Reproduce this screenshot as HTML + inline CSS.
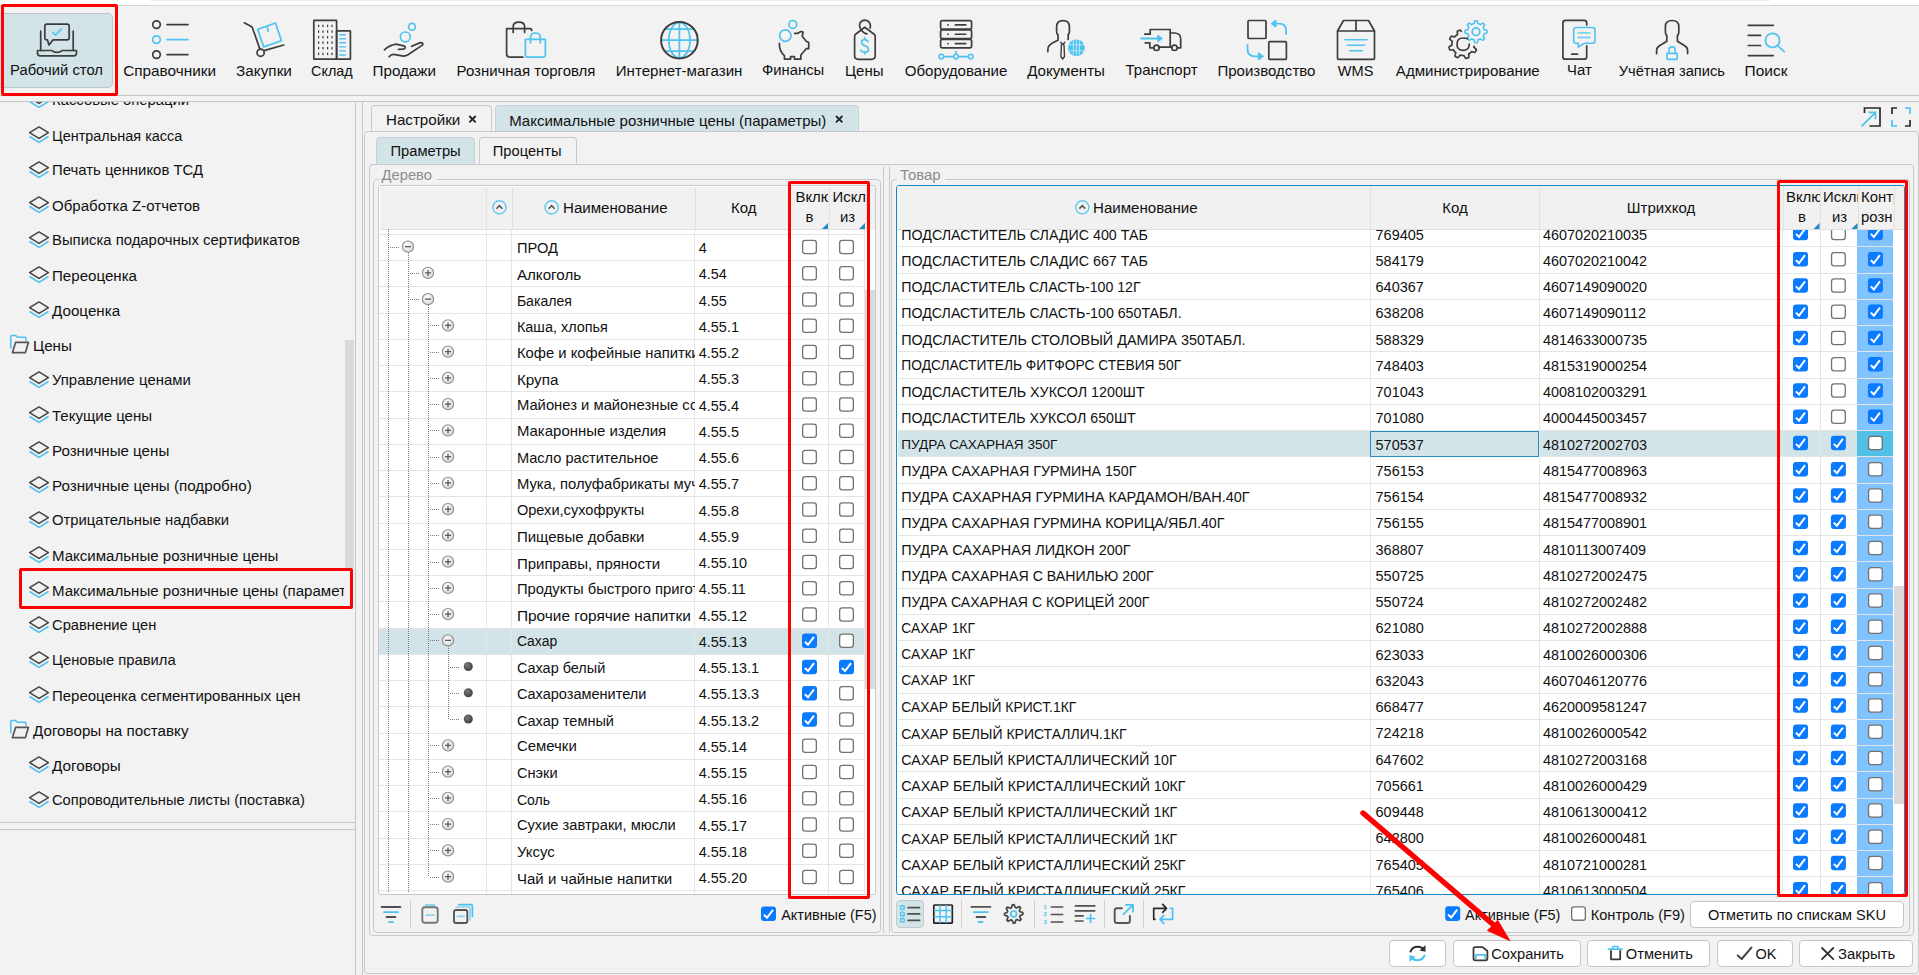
<!DOCTYPE html><html><head><meta charset="utf-8"><style>
html,body{margin:0;padding:0;}
body{width:1919px;height:975px;position:relative;overflow:hidden;background:#f2f2f2;font-family:"Liberation Sans", sans-serif;}
.t{position:absolute;white-space:nowrap;line-height:1;font-family:"Liberation Sans", sans-serif;}
div,svg{box-sizing:border-box;}
</style></head><body>
<div style="position:absolute;left:0px;top:0px;width:1919px;height:5px;background:#ffffff"></div>
<div style="position:absolute;left:150px;top:0px;width:1620px;height:1px;background:#eceeee"></div>
<div style="position:absolute;left:0px;top:5px;width:1919px;height:1px;background:#d6d6d6"></div>
<div style="position:absolute;left:0px;top:6px;width:1919px;height:89px;background:#f2f2f2"></div>
<div style="position:absolute;left:0px;top:95px;width:1919px;height:1px;background:#c6c6c6"></div>
<div style="position:absolute;left:0px;top:96px;width:1919px;height:5px;background:#f2f2f2"></div>
<div style="position:absolute;left:0px;top:101px;width:1919px;height:1px;background:#c6c6c6"></div>
<div style="position:absolute;left:-6px;top:13px;width:119px;height:75px;background:#d3e4e8;border:1px solid #bdc6c9;border-radius:5px"></div>
<div class="t" style="left:-243.5px;width:600px;text-align:center;top:63.45px;font-size:14.82px;color:#111111;">Рабочий стол</div>
<div class="t" style="left:-130.4px;width:600px;text-align:center;top:63.01px;font-size:15.35px;color:#111111;">Справочники</div>
<div class="t" style="left:-36px;width:600px;text-align:center;top:63.05px;font-size:15.3px;color:#111111;">Закупки</div>
<div class="t" style="left:31.899999999999977px;width:600px;text-align:center;top:63.81px;font-size:14.4px;color:#111111;">Склад</div>
<div class="t" style="left:104.25px;width:600px;text-align:center;top:63.13px;font-size:15.2px;color:#111111;">Продажи</div>
<div class="t" style="left:226px;width:600px;text-align:center;top:63.32px;font-size:14.98px;color:#111111;">Розничная торговля</div>
<div class="t" style="left:379.1px;width:600px;text-align:center;top:63.23px;font-size:15.09px;color:#111111;">Интернет-магазин</div>
<div class="t" style="left:493.1px;width:600px;text-align:center;top:63.45px;font-size:14.83px;color:#111111;">Финансы</div>
<div class="t" style="left:564.25px;width:600px;text-align:center;top:63.30px;font-size:15.0px;color:#111111;">Цены</div>
<div class="t" style="left:656px;width:600px;text-align:center;top:63.23px;font-size:15.09px;color:#111111;">Оборудование</div>
<div class="t" style="left:766.0999999999999px;width:600px;text-align:center;top:63.23px;font-size:15.09px;color:#111111;">Документы</div>
<div class="t" style="left:861.5px;width:600px;text-align:center;top:63.33px;font-size:14.97px;color:#111111;">Транспорт</div>
<div class="t" style="left:966.45px;width:600px;text-align:center;top:63.26px;font-size:15.05px;color:#111111;">Производство</div>
<div class="t" style="left:1055.7px;width:600px;text-align:center;top:63.64px;font-size:14.6px;color:#111111;">WMS</div>
<div class="t" style="left:1167.8px;width:600px;text-align:center;top:63.22px;font-size:15.1px;color:#111111;">Администрирование</div>
<div class="t" style="left:1279.4px;width:600px;text-align:center;top:63.39px;font-size:14.9px;color:#111111;">Чат</div>
<div class="t" style="left:1371.85px;width:600px;text-align:center;top:63.56px;font-size:14.7px;color:#111111;">Учётная запись</div>
<div class="t" style="left:1466px;width:600px;text-align:center;top:62.88px;font-size:15.5px;color:#111111;">Поиск</div>
<svg style="position:absolute;left:0;top:0" width="1919" height="100" viewBox="0 0 1919 100" fill="none"><path d="M47.5 39.9 L48.9 45 L53 39.9 L67 39.9 Q69.2 39.9 69.2 37.7 L69.2 26.4 Q69.2 24.2 67 24.2 L47 24.2 Q44.8 24.2 44.8 26.4 L44.8 37.7 Q44.8 39.9 47 39.9" stroke="#3d3d3d" stroke-width="1.7" fill="none" stroke-linecap="round" stroke-linejoin="round" /><path d="M40.7 31 V50.5 M73.2 31 V50.5" stroke="#3d3d3d" stroke-width="1.7" fill="none" stroke-linecap="round" stroke-linejoin="round" /><path d="M43.8 50.5 H37.5 V53 Q37.5 55.8 40.3 55.8 H73.7 Q76.5 55.8 76.5 53 V50.5 H70.6" stroke="#3d3d3d" stroke-width="1.7" fill="none" stroke-linecap="round" stroke-linejoin="round" /><path d="M44 50.5 H52 Q53.5 52.4 57 52.4 Q60.5 52.4 62 50.5 H70.5" stroke="#3d3d3d" stroke-width="1.7" fill="none" stroke-linecap="round" stroke-linejoin="round" /><path d="M52.8 32.3 L55.6 35 L61.3 29" stroke="#4fc3f0" stroke-width="1.7" fill="none" stroke-linecap="round" stroke-linejoin="round" /><circle cx="156.5" cy="24.6" r="3.8" stroke="#3d3d3d" stroke-width="1.7" fill="none"/><path d="M167 24.6 H188" stroke="#3d3d3d" stroke-width="1.7" fill="none" stroke-linecap="round" stroke-linejoin="round" /><circle cx="156.5" cy="39.6" r="3.8" stroke="#4fc3f0" stroke-width="1.7" fill="none"/><path d="M167 39.6 H188" stroke="#4fc3f0" stroke-width="1.7" fill="none" stroke-linecap="round" stroke-linejoin="round" /><circle cx="156.5" cy="54.6" r="3.8" stroke="#3d3d3d" stroke-width="1.7" fill="none"/><path d="M167 54.6 H188" stroke="#3d3d3d" stroke-width="1.7" fill="none" stroke-linecap="round" stroke-linejoin="round" /><path d="M244.3 22.8 L252.1 27 L260 49.4" stroke="#3d3d3d" stroke-width="1.7" fill="none" stroke-linecap="round" stroke-linejoin="round" /><circle cx="260.6" cy="52.7" r="3.6" stroke="#3d3d3d" stroke-width="1.7" fill="none"/><path d="M264 50.6 L283.8 45" stroke="#3d3d3d" stroke-width="1.7" fill="none" stroke-linecap="round" stroke-linejoin="round" /><path d="M257.7 29.4 L275.5 23 L281.4 40.7 L263.7 46.9 Z" stroke="#4fc3f0" stroke-width="1.7" fill="none" stroke-linecap="round" stroke-linejoin="round" /><path d="M267.3 27 L268.3 31.5" stroke="#4fc3f0" stroke-width="1.7" fill="none" stroke-linecap="round" stroke-linejoin="round" /><rect x="313.8" y="20.4" width="22.8" height="38.8" rx="0.5" stroke="#3d3d3d" stroke-width="1.7" fill="none"/><rect x="336.6" y="30.8" width="13.8" height="28.4" rx="0.5" stroke="#3d3d3d" stroke-width="1.7" fill="none"/><rect x="318.0" y="24.7" width="1.2" height="2.4" fill="#3d3d3d"/><rect x="318.0" y="30.400000000000002" width="1.2" height="2.4" fill="#3d3d3d"/><rect x="318.0" y="36.0" width="1.2" height="2.4" fill="#3d3d3d"/><rect x="318.0" y="41.4" width="1.2" height="2.4" fill="#3d3d3d"/><rect x="318.0" y="47.0" width="1.2" height="2.4" fill="#3d3d3d"/><rect x="318.0" y="52.699999999999996" width="1.2" height="2.4" fill="#3d3d3d"/><rect x="322.4" y="24.7" width="1.2" height="2.4" fill="#3d3d3d"/><rect x="322.4" y="30.400000000000002" width="1.2" height="2.4" fill="#3d3d3d"/><rect x="322.4" y="36.0" width="1.2" height="2.4" fill="#3d3d3d"/><rect x="322.4" y="41.4" width="1.2" height="2.4" fill="#3d3d3d"/><rect x="322.4" y="47.0" width="1.2" height="2.4" fill="#3d3d3d"/><rect x="322.4" y="52.699999999999996" width="1.2" height="2.4" fill="#3d3d3d"/><rect x="327.0" y="24.7" width="1.2" height="2.4" fill="#3d3d3d"/><rect x="327.0" y="30.400000000000002" width="1.2" height="2.4" fill="#3d3d3d"/><rect x="327.0" y="36.0" width="1.2" height="2.4" fill="#3d3d3d"/><rect x="327.0" y="41.4" width="1.2" height="2.4" fill="#3d3d3d"/><rect x="327.0" y="47.0" width="1.2" height="2.4" fill="#3d3d3d"/><rect x="327.0" y="52.699999999999996" width="1.2" height="2.4" fill="#3d3d3d"/><rect x="331.4" y="24.7" width="1.2" height="2.4" fill="#3d3d3d"/><rect x="331.4" y="30.400000000000002" width="1.2" height="2.4" fill="#3d3d3d"/><rect x="331.4" y="36.0" width="1.2" height="2.4" fill="#3d3d3d"/><rect x="331.4" y="41.4" width="1.2" height="2.4" fill="#3d3d3d"/><rect x="331.4" y="47.0" width="1.2" height="2.4" fill="#3d3d3d"/><rect x="331.4" y="52.699999999999996" width="1.2" height="2.4" fill="#3d3d3d"/><path d="M339.6 34.7 H345.4" stroke="#4fc3f0" stroke-width="1.4" fill="none" stroke-linecap="round" stroke-linejoin="round" /><path d="M339.6 38.8 H345.4" stroke="#4fc3f0" stroke-width="1.4" fill="none" stroke-linecap="round" stroke-linejoin="round" /><path d="M339.6 42.8 H345.4" stroke="#4fc3f0" stroke-width="1.4" fill="none" stroke-linecap="round" stroke-linejoin="round" /><path d="M339.6 46.9 H345.4" stroke="#4fc3f0" stroke-width="1.4" fill="none" stroke-linecap="round" stroke-linejoin="round" /><path d="M339.6 50.9 H345.4" stroke="#4fc3f0" stroke-width="1.4" fill="none" stroke-linecap="round" stroke-linejoin="round" /><path d="M339.6 55 H345.4" stroke="#4fc3f0" stroke-width="1.4" fill="none" stroke-linecap="round" stroke-linejoin="round" /><path d="M384.4 49.8 Q390 45 396.4 44.2 L404.5 46.2 Q406.5 48 403.5 49.2 L398.5 49.4" stroke="#3d3d3d" stroke-width="1.7" fill="none" stroke-linecap="round" stroke-linejoin="round" /><path d="M389.1 56.7 Q391 54.2 393.5 54.3 L403.7 56.1 Q406 56 408 54.8 L422.8 44.9 Q423.3 42.6 420.4 42.6 L411.6 46.3" stroke="#3d3d3d" stroke-width="1.7" fill="none" stroke-linecap="round" stroke-linejoin="round" /><circle cx="412" cy="26.7" r="3.4" stroke="#4fc3f0" stroke-width="1.7" fill="none"/><circle cx="405.3" cy="36.9" r="4.9" stroke="#4fc3f0" stroke-width="1.7" fill="none"/><path d="M523 57.1 H509.6 Q506.6 57.1 506.6 54.1 V28.7 H530.2 Q531.7 28.7 531.7 30.5" stroke="#3d3d3d" stroke-width="1.7" fill="none" stroke-linecap="round" stroke-linejoin="round" /><path d="M513.2 32.5 V26.5 Q513.2 22.1 518.9 22.1 Q524.6 22.1 524.6 26.5 V32.5" stroke="#3d3d3d" stroke-width="1.7" fill="none" stroke-linecap="round" stroke-linejoin="round" /><path d="M525.4 39.3 H545.4 V54.6 Q545.4 57.1 542.9 57.1 H527.9 Q525.4 57.1 525.4 54.6 Z" stroke="#4fc3f0" stroke-width="1.7" fill="none" stroke-linecap="round" stroke-linejoin="round" /><path d="M530.5 42.9 V37.3 Q530.5 33 535.4 33 Q540.3 33 540.3 37.3 V42.9" stroke="#4fc3f0" stroke-width="1.7" fill="none" stroke-linecap="round" stroke-linejoin="round" /><ellipse cx="679.4" cy="40.2" rx="10.6" ry="17.8" stroke="#4fc3f0" stroke-width="1.7" fill="none"/><path d="M679.4 22.5 V58 M661.5 40.2 H697.3 M665.6 29.2 H693.2 M665.6 51.2 H693.2" stroke="#4fc3f0" stroke-width="1.7" fill="none" stroke-linejoin="round" stroke-linecap="butt"/><circle cx="679.4" cy="40.2" r="18.3" stroke="#3d3d3d" stroke-width="2" fill="none"/><circle cx="792.8" cy="24.4" r="3.9" stroke="#4fc3f0" stroke-width="1.7" fill="none"/><circle cx="785.3" cy="35.6" r="5.7" stroke="#4fc3f0" stroke-width="1.7" fill="none"/><path d="M779.4 43.3 Q779 51 784.4 55.6 V59.1 H790.6 V56.6 H794.4 V59.1 H800.9 V55 L806.2 48.7 H808.7 V42.5 L806.2 41.2 L802.2 36.2 L803.1 32.2 Q802 31.3 800.9 31.6 L797.5 33.4 H794.7" stroke="#3d3d3d" stroke-width="1.7" fill="none" stroke-linecap="round" stroke-linejoin="round" /><path d="M867 33.8 Q864 33.5 862 31 Q859.5 28 859.5 25.5 Q860 20.5 864.7 20.2 Q869.5 20.2 870.4 25.5 Q870.6 27 870 28" stroke="#3d3d3d" stroke-width="1.7" fill="none" stroke-linecap="round"/><path d="M864.7 27.3 L874.2 34.2 Q875.2 35 875.2 36.5 V55.6 Q875.2 59.4 871.4 59.4 H858.4 Q854.6 59.4 854.6 55.6 V36.5 Q854.6 35 855.6 34.2 Z" stroke="#3d3d3d" stroke-width="1.7" fill="none" stroke-linecap="round" stroke-linejoin="round" /><path d="M868.2 41.5 Q866.8 39.6 864.4 39.6 Q861.5 39.6 861.5 42.3 Q861.5 44.6 864.7 45.6 Q868.4 46.5 868.4 49.4 Q868.4 52.2 864.8 52.2 Q862 52.2 860.8 50.2 M864.7 37.5 V39.6 M864.7 52.2 V54" stroke="#4fc3f0" stroke-width="1.7" fill="none" stroke-linecap="round" stroke-linejoin="round" /><rect x="940.6" y="20.6" width="31" height="8.6" rx="1.8" stroke="#3d3d3d" stroke-width="1.7" fill="none"/><circle cx="948" cy="24.900000000000002" r="0.9" fill="#3d3d3d"/><path d="M955.3 24.900000000000002 H965.8" stroke="#3d3d3d" stroke-width="1.6" fill="none" stroke-linecap="round" stroke-linejoin="round" /><rect x="940.6" y="29.950000000000003" width="31" height="8.6" rx="1.8" stroke="#3d3d3d" stroke-width="1.7" fill="none"/><circle cx="948" cy="34.25" r="0.9" fill="#3d3d3d"/><path d="M955.3 34.25 H965.8" stroke="#3d3d3d" stroke-width="1.6" fill="none" stroke-linecap="round" stroke-linejoin="round" /><rect x="940.6" y="39.3" width="31" height="8.6" rx="1.8" stroke="#3d3d3d" stroke-width="1.7" fill="none"/><circle cx="948" cy="43.599999999999994" r="0.9" fill="#3d3d3d"/><path d="M955.3 43.599999999999994 H965.8" stroke="#3d3d3d" stroke-width="1.6" fill="none" stroke-linecap="round" stroke-linejoin="round" /><path d="M941.5 56.6 H970.5" stroke="#4fc3f0" stroke-width="1.6" fill="none" stroke-linecap="round" stroke-linejoin="round" /><circle cx="941.3" cy="56.6" r="2.3" stroke="#4fc3f0" stroke-width="1.6" fill="#f2f2f2"/><circle cx="956" cy="56.6" r="2.3" stroke="#4fc3f0" stroke-width="1.6" fill="#f2f2f2"/><circle cx="970.8" cy="56.6" r="2.3" stroke="#4fc3f0" stroke-width="1.6" fill="#f2f2f2"/><path d="M956 51.5 V54" stroke="#4fc3f0" stroke-width="1.6" fill="none" stroke-linecap="round" stroke-linejoin="round" /><path d="M1057.6 34.5 Q1056.6 33.5 1056.6 31.5 V26.8 Q1056.6 20.6 1063 20.6 Q1069.4 20.6 1069.4 26.8 V31.5 Q1069.4 33.5 1068.2 34.5 V39.5" stroke="#3d3d3d" stroke-width="1.7" fill="none" stroke-linecap="round" stroke-linejoin="round" /><path d="M1058 34.8 V40.2 Q1051 43 1048.5 46.5 Q1047.8 48 1047.8 51.6" stroke="#3d3d3d" stroke-width="1.7" fill="none" stroke-linecap="round" stroke-linejoin="round" /><path d="M1060.6 42.3 L1062.7 44.6 L1064.8 42.3 M1061.4 44.8 L1060.9 56.5 L1062.7 59 L1064.5 56.5 L1064 44.8" stroke="#3d3d3d" stroke-width="1.4" fill="none" stroke-linecap="round" stroke-linejoin="round" /><circle cx="1076.4" cy="47.8" r="8.4" fill="#4fc3f0"/><path d="M1073.3 40.5 V55 M1076.4 39.5 V56 M1079.5 40.5 V55 M1068.5 44.8 H1084.3 M1068.5 50.8 H1084.3" stroke="#bfe6f8" stroke-width="0.9" fill="none"/><path d="M1144.8 34.2 H1150.2 V29.5 H1170.2 V47.1 M1170.2 33 H1175 Q1180.7 33.5 1180.7 39 V47.8 H1177.6 M1158.8 47.1 H1171.6 M1145.2 42.8 H1149.9 V47.8 H1153" stroke="#3d3d3d" stroke-width="1.7" fill="none" stroke-linecap="round" stroke-linejoin="round" /><circle cx="1156.5" cy="47.8" r="2.7" stroke="#3d3d3d" stroke-width="1.7" fill="none"/><circle cx="1174.5" cy="47.8" r="2.7" stroke="#3d3d3d" stroke-width="1.7" fill="none"/><path d="M1141.2 38.5 H1158.5" stroke="#4fc3f0" stroke-width="2.1" fill="none" stroke-linecap="round" stroke-linejoin="round" /><path d="M1162.6 38.5 L1157.8 35 V42 Z" fill="#4fc3f0" stroke="#4fc3f0" stroke-width="0.8" stroke-linejoin="round"/><rect x="1248" y="20.5" width="18" height="18" rx="1" stroke="#3d3d3d" stroke-width="1.7" fill="none"/><rect x="1268.8" y="41.7" width="17.6" height="17.6" rx="1" stroke="#3d3d3d" stroke-width="1.7" fill="none"/><path d="M1273 23.6 H1279.5 Q1286.1 23.6 1286.1 30.5 V34" stroke="#4fc3f0" stroke-width="1.8" fill="none" stroke-linecap="round" stroke-linejoin="round" /><path d="M1271 23.6 L1276 20 V27.2 Z" fill="#4fc3f0" stroke="#4fc3f0" stroke-width="1" stroke-linejoin="round"/><path d="M1247.5 45 V49 Q1247.5 56.3 1255 56.3 H1260.5" stroke="#4fc3f0" stroke-width="1.8" fill="none" stroke-linecap="round" stroke-linejoin="round" /><path d="M1263.5 56.3 L1258.3 52.6 V60 Z" fill="#4fc3f0" stroke="#4fc3f0" stroke-width="1" stroke-linejoin="round"/><path d="M1337.5 31 L1343.5 20.5 H1368.5 L1374.5 31 V58.3 Q1374.5 59.4 1373.4 59.4 H1338.6 Q1337.5 59.4 1337.5 58.3 Z M1337.5 31 H1374.5 M1356 20.5 V31" stroke="#3d3d3d" stroke-width="1.7" fill="none" stroke-linecap="round" stroke-linejoin="round" /><path d="M1345 39.8 H1367 M1347.5 45.3 H1364.5 M1349.5 50.8 H1362.5" stroke="#4fc3f0" stroke-width="1.6" fill="none" stroke-linecap="round" stroke-linejoin="round" /><path d="M1487.00 31.70 L1487.00 31.80 L1487.00 31.89 L1487.00 31.99 L1486.99 32.08 L1486.99 32.18 L1486.98 32.28 L1486.98 32.37 L1486.97 32.47 L1486.97 32.56 L1486.96 32.66 L1486.95 32.75 L1486.94 32.85 L1486.85 32.94 L1486.63 33.01 L1486.41 33.07 L1486.20 33.13 L1485.98 33.19 L1485.76 33.25 L1485.55 33.30 L1485.33 33.34 L1485.11 33.39 L1484.89 33.43 L1484.68 33.47 L1484.46 33.50 L1484.24 33.53 L1484.18 33.59 L1484.17 33.66 L1484.15 33.73 L1484.13 33.80 L1484.11 33.87 L1484.09 33.94 L1484.07 34.02 L1484.05 34.09 L1484.03 34.16 L1484.01 34.23 L1483.99 34.30 L1483.97 34.37 L1483.94 34.43 L1483.92 34.50 L1483.89 34.57 L1483.87 34.64 L1483.84 34.71 L1483.82 34.78 L1483.79 34.85 L1483.76 34.91 L1483.73 34.98 L1483.70 35.05 L1483.67 35.12 L1483.64 35.18 L1483.61 35.25 L1483.58 35.32 L1483.55 35.38 L1483.52 35.45 L1483.48 35.51 L1483.45 35.58 L1483.42 35.64 L1483.38 35.71 L1483.35 35.77 L1483.31 35.84 L1483.27 35.90 L1483.24 35.96 L1483.20 36.03 L1483.16 36.09 L1483.12 36.15 L1483.12 36.24 L1483.25 36.41 L1483.38 36.59 L1483.51 36.77 L1483.64 36.95 L1483.76 37.13 L1483.88 37.32 L1484.00 37.51 L1484.11 37.70 L1484.22 37.90 L1484.33 38.09 L1484.44 38.29 L1484.54 38.50 L1484.55 38.62 L1484.49 38.70 L1484.43 38.77 L1484.36 38.84 L1484.30 38.92 L1484.24 38.99 L1484.17 39.06 L1484.11 39.13 L1484.04 39.20 L1483.98 39.27 L1483.91 39.34 L1483.85 39.41 L1483.78 39.48 L1483.71 39.55 L1483.64 39.61 L1483.57 39.68 L1483.50 39.74 L1483.43 39.81 L1483.36 39.87 L1483.29 39.94 L1483.22 40.00 L1483.14 40.06 L1483.07 40.13 L1483.00 40.19 L1482.92 40.25 L1482.80 40.24 L1482.59 40.14 L1482.39 40.03 L1482.20 39.92 L1482.00 39.81 L1481.81 39.70 L1481.62 39.58 L1481.43 39.46 L1481.25 39.34 L1481.07 39.21 L1480.89 39.08 L1480.71 38.95 L1480.54 38.82 L1480.45 38.82 L1480.39 38.86 L1480.33 38.90 L1480.26 38.94 L1480.20 38.97 L1480.14 39.01 L1480.07 39.05 L1480.01 39.08 L1479.94 39.12 L1479.88 39.15 L1479.81 39.18 L1479.75 39.22 L1479.68 39.25 L1479.62 39.28 L1479.55 39.31 L1479.48 39.34 L1479.42 39.37 L1479.35 39.40 L1479.28 39.43 L1479.21 39.46 L1479.15 39.49 L1479.08 39.52 L1479.01 39.54 L1478.94 39.57 L1478.87 39.59 L1478.80 39.62 L1478.73 39.64 L1478.67 39.67 L1478.60 39.69 L1478.53 39.71 L1478.46 39.73 L1478.39 39.75 L1478.32 39.77 L1478.24 39.79 L1478.17 39.81 L1478.10 39.83 L1478.03 39.85 L1477.96 39.87 L1477.89 39.88 L1477.83 39.94 L1477.80 40.16 L1477.77 40.38 L1477.73 40.59 L1477.69 40.81 L1477.64 41.03 L1477.60 41.25 L1477.55 41.46 L1477.49 41.68 L1477.43 41.90 L1477.37 42.11 L1477.31 42.33 L1477.24 42.55 L1477.15 42.64 L1477.05 42.65 L1476.96 42.66 L1476.86 42.67 L1476.77 42.67 L1476.67 42.68 L1476.58 42.68 L1476.48 42.69 L1476.38 42.69 L1476.29 42.70 L1476.19 42.70 L1476.10 42.70 L1476.00 42.70 L1475.90 42.70 L1475.81 42.70 L1475.71 42.70 L1475.62 42.69 L1475.52 42.69 L1475.42 42.68 L1475.33 42.68 L1475.23 42.67 L1475.14 42.67 L1475.04 42.66 L1474.95 42.65 L1474.85 42.64 L1474.76 42.55 L1474.69 42.33 L1474.63 42.11 L1474.57 41.90 L1474.51 41.68 L1474.45 41.46 L1474.40 41.25 L1474.36 41.03 L1474.31 40.81 L1474.27 40.59 L1474.23 40.38 L1474.20 40.16 L1474.17 39.94 L1474.11 39.88 L1474.04 39.87 L1473.97 39.85 L1473.90 39.83 L1473.83 39.81 L1473.76 39.79 L1473.68 39.77 L1473.61 39.75 L1473.54 39.73 L1473.47 39.71 L1473.40 39.69 L1473.33 39.67 L1473.27 39.64 L1473.20 39.62 L1473.13 39.59 L1473.06 39.57 L1472.99 39.54 L1472.92 39.52 L1472.85 39.49 L1472.79 39.46 L1472.72 39.43 L1472.65 39.40 L1472.58 39.37 L1472.52 39.34 L1472.45 39.31 L1472.38 39.28 L1472.32 39.25 L1472.25 39.22 L1472.19 39.18 L1472.12 39.15 L1472.06 39.12 L1471.99 39.08 L1471.93 39.05 L1471.86 39.01 L1471.80 38.97 L1471.74 38.94 L1471.67 38.90 L1471.61 38.86 L1471.55 38.82 L1471.46 38.82 L1471.29 38.95 L1471.11 39.08 L1470.93 39.21 L1470.75 39.34 L1470.57 39.46 L1470.38 39.58 L1470.19 39.70 L1470.00 39.81 L1469.80 39.92 L1469.61 40.03 L1469.41 40.14 L1469.20 40.24 L1469.08 40.25 L1469.00 40.19 L1468.93 40.13 L1468.86 40.06 L1468.78 40.00 L1468.71 39.94 L1468.64 39.87 L1468.57 39.81 L1468.50 39.74 L1468.43 39.68 L1468.36 39.61 L1468.29 39.55 L1468.22 39.48 L1468.15 39.41 L1468.09 39.34 L1468.02 39.27 L1467.96 39.20 L1467.89 39.13 L1467.83 39.06 L1467.76 38.99 L1467.70 38.92 L1467.64 38.84 L1467.57 38.77 L1467.51 38.70 L1467.45 38.62 L1467.46 38.50 L1467.56 38.29 L1467.67 38.09 L1467.78 37.90 L1467.89 37.70 L1468.00 37.51 L1468.12 37.32 L1468.24 37.13 L1468.36 36.95 L1468.49 36.77 L1468.62 36.59 L1468.75 36.41 L1468.88 36.24 L1468.88 36.15 L1468.84 36.09 L1468.80 36.03 L1468.76 35.96 L1468.73 35.90 L1468.69 35.84 L1468.65 35.77 L1468.62 35.71 L1468.58 35.64 L1468.55 35.58 L1468.52 35.51 L1468.48 35.45 L1468.45 35.38 L1468.42 35.32 L1468.39 35.25 L1468.36 35.18 L1468.33 35.12 L1468.30 35.05 L1468.27 34.98 L1468.24 34.91 L1468.21 34.85 L1468.18 34.78 L1468.16 34.71 L1468.13 34.64 L1468.11 34.57 L1468.08 34.50 L1468.06 34.43 L1468.03 34.37 L1468.01 34.30 L1467.99 34.23 L1467.97 34.16 L1467.95 34.09 L1467.93 34.02 L1467.91 33.94 L1467.89 33.87 L1467.87 33.80 L1467.85 33.73 L1467.83 33.66 L1467.82 33.59 L1467.76 33.53 L1467.54 33.50 L1467.32 33.47 L1467.11 33.43 L1466.89 33.39 L1466.67 33.34 L1466.45 33.30 L1466.24 33.25 L1466.02 33.19 L1465.80 33.13 L1465.59 33.07 L1465.37 33.01 L1465.15 32.94 L1465.06 32.85 L1465.05 32.75 L1465.04 32.66 L1465.03 32.56 L1465.03 32.47 L1465.02 32.37 L1465.02 32.28 L1465.01 32.18 L1465.01 32.08 L1465.00 31.99 L1465.00 31.89 L1465.00 31.80 L1465.00 31.70 L1465.00 31.60 L1465.00 31.51 L1465.00 31.41 L1465.01 31.32 L1465.01 31.22 L1465.02 31.12 L1465.02 31.03 L1465.03 30.93 L1465.03 30.84 L1465.04 30.74 L1465.05 30.65 L1465.06 30.55 L1465.15 30.46 L1465.37 30.39 L1465.59 30.33 L1465.80 30.27 L1466.02 30.21 L1466.24 30.15 L1466.45 30.10 L1466.67 30.06 L1466.89 30.01 L1467.11 29.97 L1467.32 29.93 L1467.54 29.90 L1467.76 29.87 L1467.82 29.81 L1467.83 29.74 L1467.85 29.67 L1467.87 29.60 L1467.89 29.53 L1467.91 29.46 L1467.93 29.38 L1467.95 29.31 L1467.97 29.24 L1467.99 29.17 L1468.01 29.10 L1468.03 29.03 L1468.06 28.97 L1468.08 28.90 L1468.11 28.83 L1468.13 28.76 L1468.16 28.69 L1468.18 28.62 L1468.21 28.55 L1468.24 28.49 L1468.27 28.42 L1468.30 28.35 L1468.33 28.28 L1468.36 28.22 L1468.39 28.15 L1468.42 28.08 L1468.45 28.02 L1468.48 27.95 L1468.52 27.89 L1468.55 27.82 L1468.58 27.76 L1468.62 27.69 L1468.65 27.63 L1468.69 27.56 L1468.73 27.50 L1468.76 27.44 L1468.80 27.37 L1468.84 27.31 L1468.88 27.25 L1468.88 27.16 L1468.75 26.99 L1468.62 26.81 L1468.49 26.63 L1468.36 26.45 L1468.24 26.27 L1468.12 26.08 L1468.00 25.89 L1467.89 25.70 L1467.78 25.50 L1467.67 25.31 L1467.56 25.11 L1467.46 24.90 L1467.45 24.78 L1467.51 24.70 L1467.57 24.63 L1467.64 24.56 L1467.70 24.48 L1467.76 24.41 L1467.83 24.34 L1467.89 24.27 L1467.96 24.20 L1468.02 24.13 L1468.09 24.06 L1468.15 23.99 L1468.22 23.92 L1468.29 23.85 L1468.36 23.79 L1468.43 23.72 L1468.50 23.66 L1468.57 23.59 L1468.64 23.53 L1468.71 23.46 L1468.78 23.40 L1468.86 23.34 L1468.93 23.27 L1469.00 23.21 L1469.08 23.15 L1469.20 23.16 L1469.41 23.26 L1469.61 23.37 L1469.80 23.48 L1470.00 23.59 L1470.19 23.70 L1470.38 23.82 L1470.57 23.94 L1470.75 24.06 L1470.93 24.19 L1471.11 24.32 L1471.29 24.45 L1471.46 24.58 L1471.55 24.58 L1471.61 24.54 L1471.67 24.50 L1471.74 24.46 L1471.80 24.43 L1471.86 24.39 L1471.93 24.35 L1471.99 24.32 L1472.06 24.28 L1472.12 24.25 L1472.19 24.22 L1472.25 24.18 L1472.32 24.15 L1472.38 24.12 L1472.45 24.09 L1472.52 24.06 L1472.58 24.03 L1472.65 24.00 L1472.72 23.97 L1472.79 23.94 L1472.85 23.91 L1472.92 23.88 L1472.99 23.86 L1473.06 23.83 L1473.13 23.81 L1473.20 23.78 L1473.27 23.76 L1473.33 23.73 L1473.40 23.71 L1473.47 23.69 L1473.54 23.67 L1473.61 23.65 L1473.68 23.63 L1473.76 23.61 L1473.83 23.59 L1473.90 23.57 L1473.97 23.55 L1474.04 23.53 L1474.11 23.52 L1474.17 23.46 L1474.20 23.24 L1474.23 23.02 L1474.27 22.81 L1474.31 22.59 L1474.36 22.37 L1474.40 22.15 L1474.45 21.94 L1474.51 21.72 L1474.57 21.50 L1474.63 21.29 L1474.69 21.07 L1474.76 20.85 L1474.85 20.76 L1474.95 20.75 L1475.04 20.74 L1475.14 20.73 L1475.23 20.73 L1475.33 20.72 L1475.42 20.72 L1475.52 20.71 L1475.62 20.71 L1475.71 20.70 L1475.81 20.70 L1475.90 20.70 L1476.00 20.70 L1476.10 20.70 L1476.19 20.70 L1476.29 20.70 L1476.38 20.71 L1476.48 20.71 L1476.58 20.72 L1476.67 20.72 L1476.77 20.73 L1476.86 20.73 L1476.96 20.74 L1477.05 20.75 L1477.15 20.76 L1477.24 20.85 L1477.31 21.07 L1477.37 21.29 L1477.43 21.50 L1477.49 21.72 L1477.55 21.94 L1477.60 22.15 L1477.64 22.37 L1477.69 22.59 L1477.73 22.81 L1477.77 23.02 L1477.80 23.24 L1477.83 23.46 L1477.89 23.52 L1477.96 23.53 L1478.03 23.55 L1478.10 23.57 L1478.17 23.59 L1478.24 23.61 L1478.32 23.63 L1478.39 23.65 L1478.46 23.67 L1478.53 23.69 L1478.60 23.71 L1478.67 23.73 L1478.73 23.76 L1478.80 23.78 L1478.87 23.81 L1478.94 23.83 L1479.01 23.86 L1479.08 23.88 L1479.15 23.91 L1479.21 23.94 L1479.28 23.97 L1479.35 24.00 L1479.42 24.03 L1479.48 24.06 L1479.55 24.09 L1479.62 24.12 L1479.68 24.15 L1479.75 24.18 L1479.81 24.22 L1479.88 24.25 L1479.94 24.28 L1480.01 24.32 L1480.07 24.35 L1480.14 24.39 L1480.20 24.43 L1480.26 24.46 L1480.33 24.50 L1480.39 24.54 L1480.45 24.58 L1480.54 24.58 L1480.71 24.45 L1480.89 24.32 L1481.07 24.19 L1481.25 24.06 L1481.43 23.94 L1481.62 23.82 L1481.81 23.70 L1482.00 23.59 L1482.20 23.48 L1482.39 23.37 L1482.59 23.26 L1482.80 23.16 L1482.92 23.15 L1483.00 23.21 L1483.07 23.27 L1483.14 23.34 L1483.22 23.40 L1483.29 23.46 L1483.36 23.53 L1483.43 23.59 L1483.50 23.66 L1483.57 23.72 L1483.64 23.79 L1483.71 23.85 L1483.78 23.92 L1483.85 23.99 L1483.91 24.06 L1483.98 24.13 L1484.04 24.20 L1484.11 24.27 L1484.17 24.34 L1484.24 24.41 L1484.30 24.48 L1484.36 24.56 L1484.43 24.63 L1484.49 24.70 L1484.55 24.78 L1484.54 24.90 L1484.44 25.11 L1484.33 25.31 L1484.22 25.50 L1484.11 25.70 L1484.00 25.89 L1483.88 26.08 L1483.76 26.27 L1483.64 26.45 L1483.51 26.63 L1483.38 26.81 L1483.25 26.99 L1483.12 27.16 L1483.12 27.25 L1483.16 27.31 L1483.20 27.37 L1483.24 27.44 L1483.27 27.50 L1483.31 27.56 L1483.35 27.63 L1483.38 27.69 L1483.42 27.76 L1483.45 27.82 L1483.48 27.89 L1483.52 27.95 L1483.55 28.02 L1483.58 28.08 L1483.61 28.15 L1483.64 28.22 L1483.67 28.28 L1483.70 28.35 L1483.73 28.42 L1483.76 28.49 L1483.79 28.55 L1483.82 28.62 L1483.84 28.69 L1483.87 28.76 L1483.89 28.83 L1483.92 28.90 L1483.94 28.97 L1483.97 29.03 L1483.99 29.10 L1484.01 29.17 L1484.03 29.24 L1484.05 29.31 L1484.07 29.38 L1484.09 29.46 L1484.11 29.53 L1484.13 29.60 L1484.15 29.67 L1484.17 29.74 L1484.18 29.81 L1484.24 29.87 L1484.46 29.90 L1484.68 29.93 L1484.89 29.97 L1485.11 30.01 L1485.33 30.06 L1485.55 30.10 L1485.76 30.15 L1485.98 30.21 L1486.20 30.27 L1486.41 30.33 L1486.63 30.39 L1486.85 30.46 L1486.94 30.55 L1486.95 30.65 L1486.96 30.74 L1486.97 30.84 L1486.97 30.93 L1486.98 31.03 L1486.98 31.12 L1486.99 31.22 L1486.99 31.32 L1487.00 31.41 L1487.00 31.51 L1487.00 31.60 L1487.00 31.70 Z" stroke="#4fc3f0" stroke-width="1.6" fill="none" stroke-linecap="round" stroke-linejoin="round" /><circle cx="1476" cy="31.7" r="3.8" stroke="#4fc3f0" stroke-width="1.7" fill="none"/><path d="M1474.13 46.24 L1474.12 46.31 L1474.11 46.38 L1474.09 46.45 L1474.08 46.51 L1474.07 46.58 L1474.05 46.65 L1474.04 46.71 L1474.02 46.78 L1474.01 46.85 L1473.99 46.91 L1473.97 46.98 L1473.96 47.05 L1473.94 47.11 L1473.92 47.18 L1473.91 47.25 L1473.99 47.34 L1474.14 47.45 L1474.29 47.57 L1474.44 47.69 L1474.59 47.81 L1474.74 47.94 L1474.88 48.06 L1475.03 48.19 L1475.17 48.32 L1475.32 48.45 L1475.46 48.58 L1475.60 48.71 L1475.74 48.85 L1475.88 48.99 L1476.02 49.13 L1476.15 49.27 L1476.29 49.42 L1476.42 49.56 L1476.46 49.67 L1476.43 49.75 L1476.39 49.83 L1476.36 49.91 L1476.33 50.00 L1476.29 50.08 L1476.26 50.16 L1476.22 50.24 L1476.18 50.32 L1476.15 50.40 L1476.11 50.48 L1476.07 50.56 L1476.03 50.64 L1475.99 50.71 L1475.95 50.79 L1475.91 50.87 L1475.87 50.95 L1475.83 51.03 L1475.79 51.10 L1475.75 51.18 L1475.71 51.26 L1475.66 51.34 L1475.62 51.41 L1475.58 51.49 L1475.53 51.57 L1475.49 51.64 L1475.44 51.72 L1475.40 51.79 L1475.35 51.87 L1475.31 51.94 L1475.26 52.02 L1475.21 52.09 L1475.16 52.16 L1475.11 52.24 L1475.07 52.31 L1475.02 52.38 L1474.88 52.40 L1474.69 52.37 L1474.49 52.34 L1474.30 52.30 L1474.11 52.27 L1473.91 52.23 L1473.72 52.19 L1473.53 52.15 L1473.34 52.10 L1473.15 52.06 L1472.97 52.01 L1472.78 51.96 L1472.59 51.91 L1472.41 51.85 L1472.23 51.80 L1472.04 51.74 L1471.86 51.68 L1471.68 51.62 L1471.58 51.62 L1471.53 51.67 L1471.49 51.72 L1471.44 51.77 L1471.40 51.82 L1471.35 51.87 L1471.30 51.92 L1471.26 51.97 L1471.21 52.02 L1471.16 52.07 L1471.12 52.12 L1471.07 52.17 L1471.02 52.22 L1470.97 52.27 L1470.92 52.32 L1470.87 52.36 L1470.82 52.41 L1470.77 52.46 L1470.72 52.50 L1470.67 52.55 L1470.62 52.60 L1470.57 52.64 L1470.52 52.69 L1470.47 52.73 L1470.42 52.78 L1470.37 52.82 L1470.31 52.87 L1470.26 52.91 L1470.21 52.95 L1470.16 53.00 L1470.10 53.04 L1470.05 53.08 L1470.00 53.13 L1469.94 53.17 L1469.89 53.21 L1469.83 53.25 L1469.78 53.29 L1469.72 53.33 L1469.67 53.37 L1469.61 53.41 L1469.56 53.45 L1469.50 53.49 L1469.44 53.53 L1469.39 53.57 L1469.33 53.61 L1469.27 53.64 L1469.22 53.68 L1469.16 53.72 L1469.10 53.76 L1469.04 53.79 L1468.99 53.83 L1468.93 53.86 L1468.87 53.90 L1468.81 53.94 L1468.75 53.97 L1468.69 54.00 L1468.63 54.04 L1468.66 54.23 L1468.68 54.42 L1468.71 54.61 L1468.73 54.80 L1468.75 54.99 L1468.76 55.18 L1468.78 55.37 L1468.79 55.57 L1468.80 55.76 L1468.81 55.95 L1468.82 56.15 L1468.82 56.34 L1468.82 56.54 L1468.82 56.74 L1468.82 56.93 L1468.81 57.13 L1468.81 57.33 L1468.80 57.53 L1468.71 57.56 L1468.63 57.59 L1468.55 57.63 L1468.47 57.66 L1468.39 57.69 L1468.31 57.73 L1468.23 57.76 L1468.14 57.79 L1468.06 57.82 L1467.98 57.85 L1467.89 57.88 L1467.81 57.91 L1467.73 57.94 L1467.65 57.96 L1467.56 57.99 L1467.48 58.02 L1467.39 58.04 L1467.31 58.07 L1467.23 58.10 L1467.14 58.12 L1467.06 58.15 L1466.97 58.17 L1466.89 58.19 L1466.80 58.22 L1466.72 58.24 L1466.63 58.26 L1466.55 58.28 L1466.46 58.30 L1466.38 58.32 L1466.29 58.34 L1466.20 58.36 L1466.12 58.38 L1466.03 58.40 L1465.95 58.42 L1465.86 58.43 L1465.77 58.45 L1465.66 58.29 L1465.54 58.13 L1465.42 57.97 L1465.31 57.81 L1465.20 57.65 L1465.09 57.48 L1464.99 57.32 L1464.88 57.15 L1464.78 56.99 L1464.68 56.82 L1464.58 56.66 L1464.49 56.49 L1464.40 56.32 L1464.30 56.15 L1464.21 55.98 L1464.13 55.81 L1464.04 55.64 L1463.96 55.47 L1463.89 55.47 L1463.82 55.48 L1463.75 55.48 L1463.69 55.48 L1463.62 55.49 L1463.55 55.49 L1463.48 55.49 L1463.41 55.50 L1463.34 55.50 L1463.28 55.50 L1463.21 55.50 L1463.14 55.50 L1463.07 55.50 L1463.00 55.50 L1462.93 55.50 L1462.87 55.50 L1462.80 55.50 L1462.73 55.49 L1462.66 55.49 L1462.59 55.49 L1462.52 55.49 L1462.46 55.48 L1462.39 55.48 L1462.32 55.47 L1462.25 55.47 L1462.18 55.46 L1462.11 55.46 L1462.05 55.45 L1461.98 55.44 L1461.91 55.44 L1461.84 55.43 L1461.77 55.42 L1461.71 55.41 L1461.64 55.40 L1461.57 55.40 L1461.50 55.39 L1461.43 55.38 L1461.37 55.37 L1461.30 55.35 L1461.23 55.34 L1461.16 55.33 L1461.10 55.32 L1461.03 55.31 L1460.96 55.29 L1460.90 55.28 L1460.83 55.27 L1460.76 55.25 L1460.69 55.24 L1460.63 55.22 L1460.56 55.21 L1460.49 55.19 L1460.43 55.18 L1460.36 55.16 L1460.30 55.14 L1460.23 55.13 L1460.16 55.11 L1460.08 55.16 L1459.96 55.32 L1459.85 55.47 L1459.73 55.62 L1459.61 55.77 L1459.48 55.91 L1459.36 56.06 L1459.23 56.21 L1459.10 56.35 L1458.97 56.50 L1458.84 56.64 L1458.70 56.78 L1458.57 56.92 L1458.43 57.06 L1458.29 57.20 L1458.15 57.33 L1458.01 57.47 L1457.86 57.60 L1457.74 57.67 L1457.66 57.63 L1457.58 57.60 L1457.50 57.57 L1457.42 57.53 L1457.33 57.50 L1457.25 57.46 L1457.17 57.42 L1457.09 57.39 L1457.01 57.35 L1456.93 57.31 L1456.86 57.28 L1456.78 57.24 L1456.70 57.20 L1456.62 57.16 L1456.54 57.12 L1456.46 57.08 L1456.38 57.04 L1456.31 57.00 L1456.23 56.95 L1456.15 56.91 L1456.07 56.87 L1456.00 56.83 L1455.92 56.78 L1455.85 56.74 L1455.77 56.69 L1455.69 56.65 L1455.62 56.60 L1455.54 56.56 L1455.47 56.51 L1455.39 56.47 L1455.32 56.42 L1455.25 56.37 L1455.17 56.32 L1455.10 56.27 L1455.03 56.22 L1455.00 56.11 L1455.03 55.92 L1455.06 55.72 L1455.09 55.53 L1455.13 55.33 L1455.17 55.14 L1455.21 54.95 L1455.25 54.76 L1455.29 54.57 L1455.34 54.38 L1455.38 54.19 L1455.43 54.01 L1455.49 53.82 L1455.54 53.64 L1455.60 53.45 L1455.65 53.27 L1455.71 53.09 L1455.78 52.91 L1455.79 52.78 L1455.74 52.74 L1455.69 52.69 L1455.63 52.65 L1455.58 52.60 L1455.53 52.56 L1455.48 52.51 L1455.43 52.46 L1455.38 52.42 L1455.33 52.37 L1455.28 52.32 L1455.24 52.27 L1455.19 52.23 L1455.14 52.18 L1455.09 52.13 L1455.04 52.08 L1455.00 52.03 L1454.95 51.98 L1454.90 51.93 L1454.86 51.88 L1454.81 51.83 L1454.76 51.78 L1454.72 51.73 L1454.67 51.68 L1454.63 51.63 L1454.58 51.57 L1454.54 51.52 L1454.50 51.47 L1454.45 51.42 L1454.41 51.36 L1454.37 51.31 L1454.32 51.26 L1454.28 51.20 L1454.24 51.15 L1454.20 51.09 L1454.16 51.04 L1454.11 50.99 L1454.07 50.93 L1454.03 50.88 L1453.99 50.82 L1453.95 50.76 L1453.91 50.71 L1453.88 50.65 L1453.84 50.60 L1453.80 50.54 L1453.76 50.48 L1453.72 50.42 L1453.69 50.37 L1453.65 50.31 L1453.61 50.25 L1453.58 50.19 L1453.54 50.14 L1453.50 50.08 L1453.47 50.02 L1453.43 49.96 L1453.40 49.90 L1453.37 49.84 L1453.20 49.86 L1453.01 49.88 L1452.82 49.90 L1452.63 49.93 L1452.44 49.94 L1452.25 49.96 L1452.05 49.98 L1451.86 49.99 L1451.67 50.00 L1451.47 50.01 L1451.28 50.01 L1451.08 50.02 L1450.89 50.02 L1450.69 50.02 L1450.49 50.02 L1450.30 50.01 L1450.10 50.01 L1449.90 50.00 L1449.84 49.93 L1449.81 49.85 L1449.78 49.76 L1449.74 49.68 L1449.71 49.60 L1449.68 49.52 L1449.65 49.44 L1449.62 49.35 L1449.59 49.27 L1449.56 49.19 L1449.53 49.11 L1449.50 49.02 L1449.47 48.94 L1449.44 48.86 L1449.41 48.77 L1449.39 48.69 L1449.36 48.61 L1449.33 48.52 L1449.31 48.44 L1449.28 48.35 L1449.26 48.27 L1449.23 48.18 L1449.21 48.10 L1449.19 48.01 L1449.16 47.93 L1449.14 47.84 L1449.12 47.76 L1449.10 47.67 L1449.08 47.59 L1449.06 47.50 L1449.04 47.42 L1449.02 47.33 L1449.00 47.24 L1448.99 47.16 L1448.97 47.07 L1448.95 46.99 L1449.09 46.87 L1449.25 46.76 L1449.41 46.64 L1449.57 46.53 L1449.73 46.42 L1449.89 46.31 L1450.06 46.20 L1450.22 46.10 L1450.39 46.00 L1450.55 45.90 L1450.72 45.80 L1450.89 45.70 L1451.06 45.61 L1451.23 45.52 L1451.40 45.43 L1451.57 45.34 L1451.74 45.25 L1451.91 45.17 L1451.93 45.10 L1451.92 45.03 L1451.92 44.96 L1451.92 44.90 L1451.91 44.83 L1451.91 44.76 L1451.91 44.69 L1451.90 44.62 L1451.90 44.55 L1451.90 44.49 L1451.90 44.42 L1451.90 44.35 L1451.90 44.28 L1451.90 44.21 L1451.90 44.14 L1451.90 44.08 L1451.90 44.01 L1451.91 43.94 L1451.91 43.87 L1451.91 43.80 L1451.91 43.73 L1451.92 43.67 L1451.92 43.60 L1451.93 43.53 L1451.93 43.46 L1451.94 43.39 L1451.94 43.32 L1451.95 43.26 L1451.96 43.19 L1451.96 43.12 L1451.97 43.05 L1451.98 42.98 L1451.99 42.92 L1451.99 42.85 L1452.00 42.78 L1452.01 42.71 L1452.02 42.64 L1452.03 42.58 L1452.04 42.51 L1452.06 42.44 L1452.07 42.37 L1452.08 42.31 L1452.09 42.24 L1452.10 42.17 L1452.12 42.11 L1452.13 42.04 L1452.14 41.97 L1452.16 41.90 L1452.17 41.84 L1452.19 41.77 L1452.20 41.70 L1452.22 41.64 L1452.24 41.57 L1452.25 41.51 L1452.27 41.44 L1452.29 41.37 L1452.26 41.29 L1452.11 41.18 L1451.95 41.06 L1451.80 40.94 L1451.65 40.82 L1451.51 40.70 L1451.36 40.58 L1451.21 40.45 L1451.07 40.32 L1450.92 40.19 L1450.78 40.06 L1450.64 39.92 L1450.50 39.79 L1450.36 39.65 L1450.22 39.51 L1450.09 39.37 L1449.95 39.23 L1449.82 39.08 L1449.73 38.95 L1449.76 38.87 L1449.80 38.79 L1449.83 38.71 L1449.86 38.63 L1449.90 38.55 L1449.93 38.47 L1449.97 38.39 L1450.01 38.31 L1450.04 38.23 L1450.08 38.15 L1450.12 38.07 L1450.16 37.99 L1450.20 37.91 L1450.24 37.83 L1450.28 37.75 L1450.32 37.67 L1450.36 37.60 L1450.40 37.52 L1450.44 37.44 L1450.48 37.36 L1450.52 37.29 L1450.57 37.21 L1450.61 37.13 L1450.65 37.06 L1450.70 36.98 L1450.74 36.91 L1450.79 36.83 L1450.84 36.75 L1450.88 36.68 L1450.93 36.61 L1450.98 36.53 L1451.02 36.46 L1451.07 36.38 L1451.12 36.31 L1451.17 36.24 L1451.26 36.19 L1451.46 36.22 L1451.65 36.25 L1451.85 36.29 L1452.04 36.32 L1452.23 36.36 L1452.42 36.40 L1452.61 36.44 L1452.80 36.48 L1452.99 36.53 L1453.18 36.58 L1453.37 36.63 L1453.55 36.68 L1453.74 36.73 L1453.92 36.79 L1454.10 36.85 L1454.29 36.90 L1454.47 36.97 L1454.61 37.00 L1454.65 36.94 L1454.70 36.89 L1454.74 36.84 L1454.79 36.79 L1454.84 36.74 L1454.88 36.69 L1454.93 36.64 L1454.98 36.59 L1455.02 36.54 L1455.07 36.49 L1455.12 36.44 L1455.17 36.39 L1455.22 36.35 L1455.26 36.30 L1455.31 36.25 L1455.36 36.20 L1455.41 36.16 L1455.46 36.11 L1455.51 36.06 L1455.56 36.02 L1455.61 35.97 L1455.66 35.92 L1455.72 35.88 L1455.77 35.83 L1455.82 35.79 L1455.87 35.75 L1455.92 35.70 L1455.98 35.66 L1456.03 35.61 L1456.08 35.57 L1456.14 35.53 L1456.19 35.49 L1456.24 35.44 L1456.30 35.40 L1456.35 35.36 L1456.41 35.32 L1456.46 35.28 L1456.52 35.24 L1456.57 35.20 L1456.63 35.16 L1456.68 35.12 L1456.74 35.08 L1456.80 35.04 L1456.85 35.00 L1456.91 34.97 L1456.97 34.93 L1457.02 34.89 L1457.08 34.85 L1457.14 34.82 L1457.20 34.78 L1457.26 34.75 L1457.31 34.71 L1457.37 34.67 L1457.43 34.64 L1457.49 34.61 L1457.55 34.57 L1457.55 34.43 L1457.52 34.24 L1457.50 34.05 L1457.48 33.86 L1457.46 33.67 L1457.44 33.47 L1457.43 33.28 L1457.41 33.09 L1457.40 32.90 L1457.39 32.70 L1457.39 32.51 L1457.38 32.31 L1457.38 32.12 L1457.38 31.92 L1457.38 31.72 L1457.39 31.53 L1457.39 31.33 L1457.40 31.13 L1457.46 31.05 L1457.54 31.02 L1457.62 30.98 L1457.71 30.95 L1457.79 30.92 L1457.87 30.88 L1457.95 30.85 L1458.03 30.82 L1458.12 30.79 L1458.20 30.76 L1458.28 30.73 L1458.36 30.70 L1458.45 30.67 L1458.53 30.64 L1458.61 30.62 L1458.70 30.59 L1458.78 30.56 L1458.87 30.54 L1458.95 30.51 L1459.03 30.49 L1459.12 30.46 L1459.20 30.44 L1459.29 30.41 L1459.37 30.39 L1459.46 30.37 L1459.54 30.35 L1459.63 30.32 L1459.71 30.30 L1459.80 30.28 L1459.89 30.26 L1459.97 30.24 L1460.06 30.23 L1460.14 30.21 L1460.23 30.19 L1460.32 30.17 L1460.40 30.16 L1460.51 30.26 L1460.63 30.42 L1460.74 30.58 L1460.86 30.74 L1460.97 30.91 L1461.08 31.07 L1461.18 31.23 L1461.29 31.40" stroke="#3d3d3d" stroke-width="1.7" fill="none" stroke-linecap="round" stroke-linejoin="round" /><path d="M1467.5 38.6 Q1465.5 38 1463.1 38 Q1457 38 1457 44.2 Q1457 50.3 1463.1 50.3 Q1469.2 50.3 1469.2 44.2" stroke="#3d3d3d" stroke-width="1.7" fill="none" stroke-linecap="round" stroke-linejoin="round" /><path d="M1586.7 25 V22.9 Q1586.7 20.4 1584.2 20.4 H1565.4 Q1562.9 20.4 1562.9 22.9 V56.7 Q1562.9 59.2 1565.4 59.2 H1584.2 Q1586.7 59.2 1586.7 56.7 V45.8" stroke="#3d3d3d" stroke-width="1.7" fill="none" stroke-linecap="round" stroke-linejoin="round" /><path d="M1571.7 54.2 H1577.5" stroke="#3d3d3d" stroke-width="1.7" fill="none" stroke-linecap="round" stroke-linejoin="round" /><path d="M1576.2 27.5 H1592.5 Q1595 27.5 1595 30 V40.8 Q1595 43.3 1592.5 43.3 H1584.2 L1578.3 47.1 V43.3 H1576.2 Q1573.7 43.3 1573.7 40.8 V30 Q1573.7 27.5 1576.2 27.5 Z" stroke="#4fc3f0" stroke-width="1.6" fill="none" stroke-linecap="round" stroke-linejoin="round" /><path d="M1578.2 32.9 H1589.8 M1578.2 37.5 H1589.8" stroke="#7fd0f2" stroke-width="1.9" fill="none" stroke-linecap="round" stroke-linejoin="round" /><path d="M1656.6 53.6 V50.5 Q1656.6 47.5 1659.5 45.8 L1666.8 41.2 V35.5 Q1665.4 34.5 1665.4 32 V26.5 Q1665.4 20.5 1672.1 20.5 Q1678.8 20.5 1678.8 26.5 V32 Q1678.8 34.5 1677.4 35.5 V41.2 L1684.7 45.8 Q1687.6 47.5 1687.6 50.5 V53.6" stroke="#3d3d3d" stroke-width="1.7" fill="none" stroke-linecap="round" stroke-linejoin="round" /><rect x="1667" y="53.4" width="10.2" height="6" rx="0.6" stroke="#4fc3f0" stroke-width="1.6" fill="none"/><path d="M1668.9 53.4 V50.5 Q1668.9 46.9 1672.1 46.9 Q1675.3 46.9 1675.3 50.5 V53.4" stroke="#4fc3f0" stroke-width="1.6" fill="none" stroke-linecap="round" stroke-linejoin="round" /><path d="M1748.3 25.3 H1773.3 M1748.3 35.4 H1760.5 M1748.3 45.5 H1760.5 M1748.3 55.6 H1773.3" stroke="#3d3d3d" stroke-width="1.7" fill="none" stroke-linecap="round" stroke-linejoin="round" /><circle cx="1772.5" cy="40.4" r="7.1" stroke="#4fc3f0" stroke-width="1.7" fill="none"/><path d="M1777.6 45.6 L1784.2 51.7" stroke="#4fc3f0" stroke-width="1.7" fill="none" stroke-linecap="round" stroke-linejoin="round" /></svg>
<div style="position:absolute;left:0;top:102px;width:355px;height:873px;overflow:hidden">
<div class="t" style="left:52px;top:-8.76px;font-size:14.84px;color:#111111;">Кассовые операции</div>
<div class="t" style="left:52px;top:26.58px;font-size:14.44px;color:#111111;">Центральная касса</div>
<div class="t" style="left:52px;top:61.17px;font-size:14.92px;color:#111111;">Печать ценников ТСД</div>
<div class="t" style="left:52px;top:96.05px;font-size:15.06px;color:#111111;">Обработка Z-отчетов</div>
<div class="t" style="left:52px;top:131.20px;font-size:14.89px;color:#111111;">Выписка подарочных сертификатов</div>
<div class="t" style="left:52px;top:166.02px;font-size:15.1px;color:#111111;">Переоценка</div>
<div class="t" style="left:52px;top:200.93px;font-size:15.2px;color:#111111;">Дооценка</div>
<div class="t" style="left:33px;top:235.98px;font-size:15.15px;color:#111111;">Цены</div>
<div class="t" style="left:52px;top:271.18px;font-size:14.91px;color:#111111;">Управление ценами</div>
<div class="t" style="left:52px;top:306.09px;font-size:15.02px;color:#111111;">Текущие цены</div>
<div class="t" style="left:52px;top:340.99px;font-size:15.13px;color:#111111;">Розничные цены</div>
<div class="t" style="left:52px;top:375.93px;font-size:15.2px;color:#111111;">Розничные цены (подробно)</div>
<div class="t" style="left:52px;top:411.26px;font-size:14.81px;color:#111111;">Отрицательные надбавки</div>
<div class="t" style="left:52px;top:446.06px;font-size:15.05px;color:#111111;">Максимальные розничные цены</div>
<div style="position:absolute;left:52px;top:476px;width:292px;height:24px;overflow:hidden">
<div class="t" style="left:0px;top:5.06px;font-size:15.05px;color:#111111;">Максимальные розничные цены (параметры)</div>
</div>
<div class="t" style="left:52px;top:516.33px;font-size:14.73px;color:#111111;">Сравнение цен</div>
<div class="t" style="left:52px;top:551.29px;font-size:14.78px;color:#111111;">Ценовые правила</div>
<div class="t" style="left:52px;top:586.12px;font-size:14.98px;color:#111111;">Переоценка сегментированных цен</div>
<div class="t" style="left:33px;top:620.93px;font-size:15.2px;color:#111111;">Договоры на поставку</div>
<div class="t" style="left:52px;top:655.85px;font-size:15.3px;color:#111111;">Договоры</div>
<div class="t" style="left:52px;top:691.36px;font-size:14.69px;color:#111111;">Сопроводительные листы (поставка)</div>
<svg style="position:absolute;left:0;top:0" width="355" height="873" fill="none"><path d="M29.6 -4.4 L39 -10.1 L48.4 -4.4 L39 1.4 Z" stroke="#444" stroke-width="1.5" fill="none" stroke-linejoin="round"/><path d="M30 -0.19999999999999996 L39 5.4 L48 -0.19999999999999996" stroke="#4cc2f1" stroke-width="1.6" fill="none" stroke-linejoin="round" stroke-linecap="round"/><path d="M29.6 30.6 L39 24.9 L48.4 30.6 L39 36.4 Z" stroke="#444" stroke-width="1.5" fill="none" stroke-linejoin="round"/><path d="M30 34.8 L39 40.4 L48 34.8" stroke="#4cc2f1" stroke-width="1.6" fill="none" stroke-linejoin="round" stroke-linecap="round"/><path d="M29.6 65.6 L39 59.9 L48.4 65.6 L39 71.4 Z" stroke="#444" stroke-width="1.5" fill="none" stroke-linejoin="round"/><path d="M30 69.8 L39 75.4 L48 69.8" stroke="#4cc2f1" stroke-width="1.6" fill="none" stroke-linejoin="round" stroke-linecap="round"/><path d="M29.6 100.6 L39 94.9 L48.4 100.6 L39 106.4 Z" stroke="#444" stroke-width="1.5" fill="none" stroke-linejoin="round"/><path d="M30 104.8 L39 110.4 L48 104.8" stroke="#4cc2f1" stroke-width="1.6" fill="none" stroke-linejoin="round" stroke-linecap="round"/><path d="M29.6 135.6 L39 129.9 L48.4 135.6 L39 141.4 Z" stroke="#444" stroke-width="1.5" fill="none" stroke-linejoin="round"/><path d="M30 139.8 L39 145.4 L48 139.8" stroke="#4cc2f1" stroke-width="1.6" fill="none" stroke-linejoin="round" stroke-linecap="round"/><path d="M29.6 170.6 L39 164.9 L48.4 170.6 L39 176.4 Z" stroke="#444" stroke-width="1.5" fill="none" stroke-linejoin="round"/><path d="M30 174.8 L39 180.4 L48 174.8" stroke="#4cc2f1" stroke-width="1.6" fill="none" stroke-linejoin="round" stroke-linecap="round"/><path d="M29.6 205.6 L39 199.9 L48.4 205.6 L39 211.4 Z" stroke="#444" stroke-width="1.5" fill="none" stroke-linejoin="round"/><path d="M30 209.8 L39 215.4 L48 209.8" stroke="#4cc2f1" stroke-width="1.6" fill="none" stroke-linejoin="round" stroke-linecap="round"/><path d="M10.8 246.5 V234.5 Q10.8 233.4 11.9 233.4 H15.5 L17.5 235.2 H25 Q26 235.2 26 236.2 V239" stroke="#4cc2f1" stroke-width="1.5" fill="none" stroke-linejoin="round"/><path d="M15.6 240.4 H28.4 L25.4 250.6 H12.4 Z" stroke="#555" stroke-width="1.7" fill="#f2f2f2" stroke-linejoin="round"/><path d="M29.6 275.6 L39 269.9 L48.4 275.6 L39 281.4 Z" stroke="#444" stroke-width="1.5" fill="none" stroke-linejoin="round"/><path d="M30 279.8 L39 285.4 L48 279.8" stroke="#4cc2f1" stroke-width="1.6" fill="none" stroke-linejoin="round" stroke-linecap="round"/><path d="M29.6 310.6 L39 304.9 L48.4 310.6 L39 316.4 Z" stroke="#444" stroke-width="1.5" fill="none" stroke-linejoin="round"/><path d="M30 314.8 L39 320.4 L48 314.8" stroke="#4cc2f1" stroke-width="1.6" fill="none" stroke-linejoin="round" stroke-linecap="round"/><path d="M29.6 345.6 L39 339.9 L48.4 345.6 L39 351.4 Z" stroke="#444" stroke-width="1.5" fill="none" stroke-linejoin="round"/><path d="M30 349.8 L39 355.4 L48 349.8" stroke="#4cc2f1" stroke-width="1.6" fill="none" stroke-linejoin="round" stroke-linecap="round"/><path d="M29.6 380.6 L39 374.9 L48.4 380.6 L39 386.4 Z" stroke="#444" stroke-width="1.5" fill="none" stroke-linejoin="round"/><path d="M30 384.8 L39 390.4 L48 384.8" stroke="#4cc2f1" stroke-width="1.6" fill="none" stroke-linejoin="round" stroke-linecap="round"/><path d="M29.6 415.6 L39 409.9 L48.4 415.6 L39 421.4 Z" stroke="#444" stroke-width="1.5" fill="none" stroke-linejoin="round"/><path d="M30 419.8 L39 425.4 L48 419.8" stroke="#4cc2f1" stroke-width="1.6" fill="none" stroke-linejoin="round" stroke-linecap="round"/><path d="M29.6 450.6 L39 444.9 L48.4 450.6 L39 456.4 Z" stroke="#444" stroke-width="1.5" fill="none" stroke-linejoin="round"/><path d="M30 454.8 L39 460.4 L48 454.8" stroke="#4cc2f1" stroke-width="1.6" fill="none" stroke-linejoin="round" stroke-linecap="round"/><path d="M29.6 485.6 L39 479.9 L48.4 485.6 L39 491.4 Z" stroke="#444" stroke-width="1.5" fill="none" stroke-linejoin="round"/><path d="M30 489.8 L39 495.4 L48 489.8" stroke="#4cc2f1" stroke-width="1.6" fill="none" stroke-linejoin="round" stroke-linecap="round"/><path d="M29.6 520.6 L39 514.9 L48.4 520.6 L39 526.4 Z" stroke="#444" stroke-width="1.5" fill="none" stroke-linejoin="round"/><path d="M30 524.8 L39 530.4 L48 524.8" stroke="#4cc2f1" stroke-width="1.6" fill="none" stroke-linejoin="round" stroke-linecap="round"/><path d="M29.6 555.6 L39 549.9 L48.4 555.6 L39 561.4 Z" stroke="#444" stroke-width="1.5" fill="none" stroke-linejoin="round"/><path d="M30 559.8 L39 565.4 L48 559.8" stroke="#4cc2f1" stroke-width="1.6" fill="none" stroke-linejoin="round" stroke-linecap="round"/><path d="M29.6 590.6 L39 584.9 L48.4 590.6 L39 596.4 Z" stroke="#444" stroke-width="1.5" fill="none" stroke-linejoin="round"/><path d="M30 594.8 L39 600.4 L48 594.8" stroke="#4cc2f1" stroke-width="1.6" fill="none" stroke-linejoin="round" stroke-linecap="round"/><path d="M10.8 631.5 V619.5 Q10.8 618.4 11.9 618.4 H15.5 L17.5 620.2 H25 Q26 620.2 26 621.2 V624" stroke="#4cc2f1" stroke-width="1.5" fill="none" stroke-linejoin="round"/><path d="M15.6 625.4 H28.4 L25.4 635.6 H12.4 Z" stroke="#555" stroke-width="1.7" fill="#f2f2f2" stroke-linejoin="round"/><path d="M29.6 660.6 L39 654.9 L48.4 660.6 L39 666.4 Z" stroke="#444" stroke-width="1.5" fill="none" stroke-linejoin="round"/><path d="M30 664.8 L39 670.4 L48 664.8" stroke="#4cc2f1" stroke-width="1.6" fill="none" stroke-linejoin="round" stroke-linecap="round"/><path d="M29.6 695.6 L39 689.9 L48.4 695.6 L39 701.4 Z" stroke="#444" stroke-width="1.5" fill="none" stroke-linejoin="round"/><path d="M30 699.8 L39 705.4 L48 699.8" stroke="#4cc2f1" stroke-width="1.6" fill="none" stroke-linejoin="round" stroke-linecap="round"/></svg>
</div>
<div style="position:absolute;left:345px;top:340px;width:9px;height:228px;background:#dadada"></div>
<div style="position:absolute;left:0px;top:822px;width:355px;height:1px;background:#c6c6c6"></div>
<div style="position:absolute;left:0px;top:829px;width:355px;height:1px;background:#c6c6c6"></div>
<div style="position:absolute;left:355px;top:101px;width:1px;height:874px;background:#c6c6c6"></div>
<div style="position:absolute;left:362px;top:101px;width:1px;height:874px;background:#c6c6c6"></div>
<div style="position:absolute;left:371px;top:105px;width:120.5px;height:27px;background:#f2f2f2;border:1px solid #c9c9c9;border-bottom:none;border-radius:4px 4px 0 0"></div>
<div class="t" style="left:386px;top:112.38px;font-size:15.15px;color:#111111;">Настройки</div>
<div style="position:absolute;left:495px;top:105px;width:363.5px;height:27px;background:#d3e4e8;border:1px solid #c5d3d7;border-bottom:none;border-radius:4px 4px 0 0"></div>
<div class="t" style="left:509.2px;top:112.50px;font-size:15.0px;color:#111111;">Максимальные розничные цены (параметры)</div>
<svg style="position:absolute;left:0;top:0" width="1919" height="140" fill="none"><path d="M469.3 116 L475.7 122.4 M475.7 116 L469.3 122.4" stroke="#222" stroke-width="1.8"/><path d="M836 116 L842.4 122.4 M842.4 116 L836 122.4" stroke="#222" stroke-width="1.8"/><path d="M1864.5 113 V108 H1880 V126 H1869.5" stroke="#2a2a2a" stroke-width="1.7" fill="none"/><path d="M1861.5 126.3 L1875.5 112.3 M1868.5 112.3 H1875.5 V119.3" stroke="#4cc2f1" stroke-width="1.7" fill="none"/><path d="M1892 114 V108 H1897 M1905 126 H1910 V120" stroke="#2a2a2a" stroke-width="1.7" fill="none"/><path d="M1905 108 H1910 V114 M1892 120 V126 H1897" stroke="#4cc2f1" stroke-width="1.7" fill="none"/></svg>
<div style="position:absolute;left:364px;top:131px;width:1554.5px;height:842.5px;border:1px solid #c9c9c9;border-radius:4px;background:#f2f2f2"></div>
<div style="position:absolute;left:376px;top:137px;width:99px;height:28px;background:#d3e4e8;border:1px solid #c5d3d7;border-bottom:none;border-radius:4px 4px 0 0"></div>
<div class="t" style="left:390.5px;top:144.46px;font-size:14.7px;color:#111111;">Праметры</div>
<div style="position:absolute;left:479px;top:137px;width:98px;height:28px;background:#f2f2f2;border:1px solid #c9c9c9;border-bottom:none;border-radius:4px 4px 0 0"></div>
<div class="t" style="left:492.8px;top:144.46px;font-size:14.7px;color:#111111;">Проценты</div>
<div style="position:absolute;left:369px;top:164px;width:1545px;height:772px;border:1px solid #c9c9c9;border-radius:4px;background:#f2f2f2"></div>
<div style="position:absolute;left:373px;top:179px;width:508px;height:753.5px;border:1px solid #c9c9c9;border-radius:4px"></div>
<div style="position:absolute;left:379px;top:172px;width:58px;height:14px;background:#f2f2f2"></div>
<div class="t" style="left:381.6px;top:167.86px;font-size:14.7px;color:#8c8c8c;">Дерево</div>
<div style="position:absolute;left:891px;top:179px;width:1019px;height:753.5px;border:1px solid #c9c9c9;border-radius:4px"></div>
<div style="position:absolute;left:897px;top:172px;width:48px;height:14px;background:#f2f2f2"></div>
<div class="t" style="left:900px;top:167.69px;font-size:14.9px;color:#8c8c8c;">Товар</div>
<div style="position:absolute;left:883px;top:166px;width:1px;height:767px;background:#c9c9c9"></div>
<div style="position:absolute;left:889px;top:166px;width:1px;height:767px;background:#c9c9c9"></div>
<div style="position:absolute;left:378px;top:185px;width:498px;height:710px;background:#ffffff;border:1px solid #c9c9c9;border-radius:3px"></div>
<div style="position:absolute;left:379.5px;top:186.5px;width:495px;height:43px;background:#f1f1f1"></div>
<div style="position:absolute;left:379.5px;top:229px;width:486px;height:1px;background:#dedede"></div>
<div style="position:absolute;left:486px;top:186.5px;width:1px;height:43px;background:#e2e2e2"></div>
<div style="position:absolute;left:511.5px;top:186.5px;width:1px;height:43px;background:#e2e2e2"></div>
<div style="position:absolute;left:694.5px;top:186.5px;width:1px;height:43px;background:#e2e2e2"></div>
<div style="position:absolute;left:828.5px;top:186.5px;width:1px;height:43px;background:#e2e2e2"></div>
<div style="position:absolute;left:865.5px;top:186.5px;width:1px;height:43px;background:#e2e2e2"></div>
<svg style="position:absolute;left:0;top:0" width="1919" height="240" fill="none"><circle cx="499.4" cy="207.4" r="6.6" stroke="#63c8ee" stroke-width="1.4" fill="#f1f1f1"/><path d="M496.4 208.70000000000002 L499.4 205.70000000000002 L502.4 208.70000000000002" stroke="#555" stroke-width="1.6" fill="none"/><circle cx="551.6" cy="207.4" r="6.6" stroke="#63c8ee" stroke-width="1.4" fill="#f1f1f1"/><path d="M548.6 208.70000000000002 L551.6 205.70000000000002 L554.6 208.70000000000002" stroke="#555" stroke-width="1.6" fill="none"/><path d="M822 229 L828 223 V229 Z" fill="#1d8ac4"/><path d="M859 229 L865 223 V229 Z" fill="#1d8ac4"/></svg>
<div class="t" style="left:563px;top:200.22px;font-size:15.1px;color:#111111;">Наименование</div>
<div class="t" style="left:443.79999999999995px;width:600px;text-align:center;top:200.30px;font-size:15px;color:#111111;">Код</div>
<div style="position:absolute;left:791px;top:186px;width:37px;height:43px;overflow:hidden">
<div class="t" style="left:4.5px;top:3.79px;font-size:14.9px;color:#111111;">Включ</div>
<div class="t" style="left:-281.5px;width:600px;text-align:center;top:23.89px;font-size:14.9px;color:#111111;">в</div>
</div>
<div style="position:absolute;left:829.5px;top:186px;width:36px;height:43px;overflow:hidden">
<div class="t" style="left:3px;top:3.79px;font-size:14.9px;color:#111111;">Исключ</div>
<div class="t" style="left:-282px;width:600px;text-align:center;top:23.89px;font-size:14.9px;color:#111111;">из</div>
</div>
<div style="position:absolute;left:379px;top:229px;width:486px;height:665px;overflow:hidden">
<div style="position:absolute;left:0px;top:399.15px;width:485px;height:25.75px;background:#d3e4e8"></div>
<div style="position:absolute;left:0px;top:4.900000000000006px;width:485px;height:1px;background:#e4e4e4"></div>
<div style="position:absolute;left:0px;top:31.149999999999977px;width:485px;height:1px;background:#e4e4e4"></div>
<div style="position:absolute;left:0px;top:57.39999999999998px;width:485px;height:1px;background:#e4e4e4"></div>
<div style="position:absolute;left:0px;top:83.64999999999998px;width:485px;height:1px;background:#e4e4e4"></div>
<div style="position:absolute;left:0px;top:109.89999999999998px;width:485px;height:1px;background:#e4e4e4"></div>
<div style="position:absolute;left:0px;top:136.14999999999998px;width:485px;height:1px;background:#e4e4e4"></div>
<div style="position:absolute;left:0px;top:162.39999999999998px;width:485px;height:1px;background:#e4e4e4"></div>
<div style="position:absolute;left:0px;top:188.64999999999998px;width:485px;height:1px;background:#e4e4e4"></div>
<div style="position:absolute;left:0px;top:214.89999999999998px;width:485px;height:1px;background:#e4e4e4"></div>
<div style="position:absolute;left:0px;top:241.14999999999998px;width:485px;height:1px;background:#e4e4e4"></div>
<div style="position:absolute;left:0px;top:267.4px;width:485px;height:1px;background:#e4e4e4"></div>
<div style="position:absolute;left:0px;top:293.65px;width:485px;height:1px;background:#e4e4e4"></div>
<div style="position:absolute;left:0px;top:319.9px;width:485px;height:1px;background:#e4e4e4"></div>
<div style="position:absolute;left:0px;top:346.15px;width:485px;height:1px;background:#e4e4e4"></div>
<div style="position:absolute;left:0px;top:372.4px;width:485px;height:1px;background:#e4e4e4"></div>
<div style="position:absolute;left:0px;top:398.65px;width:485px;height:1px;background:#e4e4e4"></div>
<div style="position:absolute;left:0px;top:424.9px;width:485px;height:1px;background:#e4e4e4"></div>
<div style="position:absolute;left:0px;top:451.15px;width:485px;height:1px;background:#e4e4e4"></div>
<div style="position:absolute;left:0px;top:477.4px;width:485px;height:1px;background:#e4e4e4"></div>
<div style="position:absolute;left:0px;top:503.65px;width:485px;height:1px;background:#e4e4e4"></div>
<div style="position:absolute;left:0px;top:529.9px;width:485px;height:1px;background:#e4e4e4"></div>
<div style="position:absolute;left:0px;top:556.15px;width:485px;height:1px;background:#e4e4e4"></div>
<div style="position:absolute;left:0px;top:582.4px;width:485px;height:1px;background:#e4e4e4"></div>
<div style="position:absolute;left:0px;top:608.65px;width:485px;height:1px;background:#e4e4e4"></div>
<div style="position:absolute;left:0px;top:634.9px;width:485px;height:1px;background:#e4e4e4"></div>
<div style="position:absolute;left:0px;top:661.15px;width:485px;height:1px;background:#e4e4e4"></div>
<div style="position:absolute;left:0px;top:687.4px;width:485px;height:1px;background:#e4e4e4"></div>
<div style="position:absolute;left:107px;top:0px;width:1px;height:665px;background:#e6e6e6"></div>
<div style="position:absolute;left:132px;top:0px;width:1px;height:665px;background:#e6e6e6"></div>
<div style="position:absolute;left:315px;top:0px;width:1px;height:665px;background:#e6e6e6"></div>
<div style="position:absolute;left:449px;top:0px;width:1px;height:665px;background:#e6e6e6"></div>
<div style="position:absolute;left:485px;top:0px;width:1px;height:665px;background:#e6e6e6"></div>
<svg style="position:absolute;left:0;top:0" width="485" height="663" fill="none"><defs><radialGradient id="ng" cx="0.4" cy="0.35" r="0.8"><stop offset="0" stop-color="#ffffff"/><stop offset="1" stop-color="#cfcfcf"/></radialGradient><radialGradient id="dg" cx="0.4" cy="0.35" r="0.8"><stop offset="0" stop-color="#777"/><stop offset="1" stop-color="#333"/></radialGradient></defs><path d="M9.5 0 V665" stroke="#7a7a7a" stroke-width="1" stroke-dasharray="1 1"/><path d="M29.5 24 V665" stroke="#7a7a7a" stroke-width="1" stroke-dasharray="1 1"/><path d="M49.5 76 V648" stroke="#7a7a7a" stroke-width="1" stroke-dasharray="1 1"/><path d="M69.5 417 V490" stroke="#7a7a7a" stroke-width="1" stroke-dasharray="1 1"/><path d="M11 18.5 H21" stroke="#7a7a7a" stroke-width="1" stroke-dasharray="1 1"/><circle cx="29" cy="17.625000000000007" r="5.6" fill="url(#ng)" stroke="#8c8c8c" stroke-width="1.1"/><path d="M26 17.625000000000007 H32" stroke="#5a5a5a" stroke-width="1.3"/><path d="M31 44.5 H41" stroke="#7a7a7a" stroke-width="1" stroke-dasharray="1 1"/><circle cx="49" cy="43.87499999999998" r="5.6" fill="url(#ng)" stroke="#8c8c8c" stroke-width="1.1"/><path d="M46 43.87499999999998 H52" stroke="#5a5a5a" stroke-width="1.3"/><path d="M49 40.87499999999998 V46.87499999999998" stroke="#5a5a5a" stroke-width="1.3"/><path d="M31 70.5 H41" stroke="#7a7a7a" stroke-width="1" stroke-dasharray="1 1"/><circle cx="49" cy="70.12499999999997" r="5.6" fill="url(#ng)" stroke="#8c8c8c" stroke-width="1.1"/><path d="M46 70.12499999999997 H52" stroke="#5a5a5a" stroke-width="1.3"/><path d="M51 96.5 H61" stroke="#7a7a7a" stroke-width="1" stroke-dasharray="1 1"/><circle cx="69" cy="96.37499999999997" r="5.6" fill="url(#ng)" stroke="#8c8c8c" stroke-width="1.1"/><path d="M66 96.37499999999997 H72" stroke="#5a5a5a" stroke-width="1.3"/><path d="M69 93.37499999999997 V99.37499999999997" stroke="#5a5a5a" stroke-width="1.3"/><path d="M51 123.5 H61" stroke="#7a7a7a" stroke-width="1" stroke-dasharray="1 1"/><circle cx="69" cy="122.62499999999997" r="5.6" fill="url(#ng)" stroke="#8c8c8c" stroke-width="1.1"/><path d="M66 122.62499999999997 H72" stroke="#5a5a5a" stroke-width="1.3"/><path d="M69 119.62499999999997 V125.62499999999997" stroke="#5a5a5a" stroke-width="1.3"/><path d="M51 149.5 H61" stroke="#7a7a7a" stroke-width="1" stroke-dasharray="1 1"/><circle cx="69" cy="148.87499999999997" r="5.6" fill="url(#ng)" stroke="#8c8c8c" stroke-width="1.1"/><path d="M66 148.87499999999997 H72" stroke="#5a5a5a" stroke-width="1.3"/><path d="M69 145.87499999999997 V151.87499999999997" stroke="#5a5a5a" stroke-width="1.3"/><path d="M51 175.5 H61" stroke="#7a7a7a" stroke-width="1" stroke-dasharray="1 1"/><circle cx="69" cy="175.12499999999997" r="5.6" fill="url(#ng)" stroke="#8c8c8c" stroke-width="1.1"/><path d="M66 175.12499999999997 H72" stroke="#5a5a5a" stroke-width="1.3"/><path d="M69 172.12499999999997 V178.12499999999997" stroke="#5a5a5a" stroke-width="1.3"/><path d="M51 201.5 H61" stroke="#7a7a7a" stroke-width="1" stroke-dasharray="1 1"/><circle cx="69" cy="201.37499999999997" r="5.6" fill="url(#ng)" stroke="#8c8c8c" stroke-width="1.1"/><path d="M66 201.37499999999997 H72" stroke="#5a5a5a" stroke-width="1.3"/><path d="M69 198.37499999999997 V204.37499999999997" stroke="#5a5a5a" stroke-width="1.3"/><path d="M51 228.5 H61" stroke="#7a7a7a" stroke-width="1" stroke-dasharray="1 1"/><circle cx="69" cy="227.62499999999997" r="5.6" fill="url(#ng)" stroke="#8c8c8c" stroke-width="1.1"/><path d="M66 227.62499999999997 H72" stroke="#5a5a5a" stroke-width="1.3"/><path d="M69 224.62499999999997 V230.62499999999997" stroke="#5a5a5a" stroke-width="1.3"/><path d="M51 254.5 H61" stroke="#7a7a7a" stroke-width="1" stroke-dasharray="1 1"/><circle cx="69" cy="253.87499999999997" r="5.6" fill="url(#ng)" stroke="#8c8c8c" stroke-width="1.1"/><path d="M66 253.87499999999997 H72" stroke="#5a5a5a" stroke-width="1.3"/><path d="M69 250.87499999999997 V256.875" stroke="#5a5a5a" stroke-width="1.3"/><path d="M51 280.5 H61" stroke="#7a7a7a" stroke-width="1" stroke-dasharray="1 1"/><circle cx="69" cy="280.125" r="5.6" fill="url(#ng)" stroke="#8c8c8c" stroke-width="1.1"/><path d="M66 280.125 H72" stroke="#5a5a5a" stroke-width="1.3"/><path d="M69 277.125 V283.125" stroke="#5a5a5a" stroke-width="1.3"/><path d="M51 306.5 H61" stroke="#7a7a7a" stroke-width="1" stroke-dasharray="1 1"/><circle cx="69" cy="306.375" r="5.6" fill="url(#ng)" stroke="#8c8c8c" stroke-width="1.1"/><path d="M66 306.375 H72" stroke="#5a5a5a" stroke-width="1.3"/><path d="M69 303.375 V309.375" stroke="#5a5a5a" stroke-width="1.3"/><path d="M51 333.5 H61" stroke="#7a7a7a" stroke-width="1" stroke-dasharray="1 1"/><circle cx="69" cy="332.625" r="5.6" fill="url(#ng)" stroke="#8c8c8c" stroke-width="1.1"/><path d="M66 332.625 H72" stroke="#5a5a5a" stroke-width="1.3"/><path d="M69 329.625 V335.625" stroke="#5a5a5a" stroke-width="1.3"/><path d="M51 359.5 H61" stroke="#7a7a7a" stroke-width="1" stroke-dasharray="1 1"/><circle cx="69" cy="358.875" r="5.6" fill="url(#ng)" stroke="#8c8c8c" stroke-width="1.1"/><path d="M66 358.875 H72" stroke="#5a5a5a" stroke-width="1.3"/><path d="M69 355.875 V361.875" stroke="#5a5a5a" stroke-width="1.3"/><path d="M51 385.5 H61" stroke="#7a7a7a" stroke-width="1" stroke-dasharray="1 1"/><circle cx="69" cy="385.125" r="5.6" fill="url(#ng)" stroke="#8c8c8c" stroke-width="1.1"/><path d="M66 385.125 H72" stroke="#5a5a5a" stroke-width="1.3"/><path d="M69 382.125 V388.125" stroke="#5a5a5a" stroke-width="1.3"/><path d="M51 411.5 H61" stroke="#7a7a7a" stroke-width="1" stroke-dasharray="1 1"/><circle cx="69" cy="411.375" r="5.6" fill="url(#ng)" stroke="#8c8c8c" stroke-width="1.1"/><path d="M66 411.375 H72" stroke="#5a5a5a" stroke-width="1.3"/><path d="M71 438.5 H81" stroke="#7a7a7a" stroke-width="1" stroke-dasharray="1 1"/><circle cx="89.3" cy="437.525" r="4.5" fill="url(#dg)"/><path d="M71 464.5 H81" stroke="#7a7a7a" stroke-width="1" stroke-dasharray="1 1"/><circle cx="89.3" cy="463.775" r="4.5" fill="url(#dg)"/><path d="M71 490.5 H81" stroke="#7a7a7a" stroke-width="1" stroke-dasharray="1 1"/><circle cx="89.3" cy="490.025" r="4.5" fill="url(#dg)"/><path d="M51 516.5 H61" stroke="#7a7a7a" stroke-width="1" stroke-dasharray="1 1"/><circle cx="69" cy="516.375" r="5.6" fill="url(#ng)" stroke="#8c8c8c" stroke-width="1.1"/><path d="M66 516.375 H72" stroke="#5a5a5a" stroke-width="1.3"/><path d="M69 513.375 V519.375" stroke="#5a5a5a" stroke-width="1.3"/><path d="M51 543.5 H61" stroke="#7a7a7a" stroke-width="1" stroke-dasharray="1 1"/><circle cx="69" cy="542.625" r="5.6" fill="url(#ng)" stroke="#8c8c8c" stroke-width="1.1"/><path d="M66 542.625 H72" stroke="#5a5a5a" stroke-width="1.3"/><path d="M69 539.625 V545.625" stroke="#5a5a5a" stroke-width="1.3"/><path d="M51 569.5 H61" stroke="#7a7a7a" stroke-width="1" stroke-dasharray="1 1"/><circle cx="69" cy="568.875" r="5.6" fill="url(#ng)" stroke="#8c8c8c" stroke-width="1.1"/><path d="M66 568.875 H72" stroke="#5a5a5a" stroke-width="1.3"/><path d="M69 565.875 V571.875" stroke="#5a5a5a" stroke-width="1.3"/><path d="M51 595.5 H61" stroke="#7a7a7a" stroke-width="1" stroke-dasharray="1 1"/><circle cx="69" cy="595.125" r="5.6" fill="url(#ng)" stroke="#8c8c8c" stroke-width="1.1"/><path d="M66 595.125 H72" stroke="#5a5a5a" stroke-width="1.3"/><path d="M69 592.125 V598.125" stroke="#5a5a5a" stroke-width="1.3"/><path d="M51 621.5 H61" stroke="#7a7a7a" stroke-width="1" stroke-dasharray="1 1"/><circle cx="69" cy="621.375" r="5.6" fill="url(#ng)" stroke="#8c8c8c" stroke-width="1.1"/><path d="M66 621.375 H72" stroke="#5a5a5a" stroke-width="1.3"/><path d="M69 618.375 V624.375" stroke="#5a5a5a" stroke-width="1.3"/><path d="M51 648.5 H61" stroke="#7a7a7a" stroke-width="1" stroke-dasharray="1 1"/><circle cx="69" cy="647.625" r="5.6" fill="url(#ng)" stroke="#8c8c8c" stroke-width="1.1"/><path d="M66 647.625 H72" stroke="#5a5a5a" stroke-width="1.3"/><path d="M69 644.625 V650.625" stroke="#5a5a5a" stroke-width="1.3"/></svg>
<div style="position:absolute;left:133.5px;top:4.900000000000006px;width:182.0px;height:26.25px;overflow:hidden">
<div class="t" style="left:4.399999999999977px;top:7.02px;font-size:14.66px;color:#111111;">ПРОД</div>
</div>
<div class="t" style="left:319.79999999999995px;top:12.10px;font-size:14.44px;color:#111111;">4</div>
<div style="position:absolute;left:133.5px;top:31.149999999999977px;width:182.0px;height:26.25px;overflow:hidden">
<div class="t" style="left:4.399999999999977px;top:6.58px;font-size:15.18px;color:#111111;">Алкоголь</div>
</div>
<div class="t" style="left:319.79999999999995px;top:38.35px;font-size:14.44px;color:#111111;">4.54</div>
<div style="position:absolute;left:133.5px;top:57.39999999999998px;width:182.0px;height:26.25px;overflow:hidden">
<div class="t" style="left:4.399999999999977px;top:7.51px;font-size:14.07px;color:#111111;">Бакалея</div>
</div>
<div class="t" style="left:319.79999999999995px;top:64.60px;font-size:14.44px;color:#111111;">4.55</div>
<div style="position:absolute;left:133.5px;top:83.64999999999998px;width:182.0px;height:26.25px;overflow:hidden">
<div class="t" style="left:4.399999999999977px;top:7.21px;font-size:14.43px;color:#111111;">Каша, хлопья</div>
</div>
<div class="t" style="left:319.79999999999995px;top:90.85px;font-size:14.44px;color:#111111;">4.55.1</div>
<div style="position:absolute;left:133.5px;top:109.89999999999998px;width:182.0px;height:26.25px;overflow:hidden">
<div class="t" style="left:4.399999999999977px;top:6.90px;font-size:14.8px;color:#111111;">Кофе и кофейные напитки</div>
</div>
<div class="t" style="left:319.79999999999995px;top:117.10px;font-size:14.44px;color:#111111;">4.55.2</div>
<div style="position:absolute;left:133.5px;top:136.14999999999998px;width:182.0px;height:26.25px;overflow:hidden">
<div class="t" style="left:4.399999999999977px;top:6.50px;font-size:15.27px;color:#111111;">Крупа</div>
</div>
<div class="t" style="left:319.79999999999995px;top:143.35px;font-size:14.44px;color:#111111;">4.55.3</div>
<div style="position:absolute;left:133.5px;top:162.39999999999998px;width:182.0px;height:26.25px;overflow:hidden">
<div class="t" style="left:4.399999999999977px;top:6.90px;font-size:14.8px;color:#111111;">Майонез и майонезные соусы</div>
</div>
<div class="t" style="left:319.79999999999995px;top:169.60px;font-size:14.44px;color:#111111;">4.55.4</div>
<div style="position:absolute;left:133.5px;top:188.64999999999998px;width:182.0px;height:26.25px;overflow:hidden">
<div class="t" style="left:4.399999999999977px;top:6.75px;font-size:14.97px;color:#111111;">Макаронные изделия</div>
</div>
<div class="t" style="left:319.79999999999995px;top:195.85px;font-size:14.44px;color:#111111;">4.55.5</div>
<div style="position:absolute;left:133.5px;top:214.89999999999998px;width:182.0px;height:26.25px;overflow:hidden">
<div class="t" style="left:4.399999999999977px;top:7.07px;font-size:14.6px;color:#111111;">Масло растительное</div>
</div>
<div class="t" style="left:319.79999999999995px;top:222.10px;font-size:14.44px;color:#111111;">4.55.6</div>
<div style="position:absolute;left:133.5px;top:241.14999999999998px;width:182.0px;height:26.25px;overflow:hidden">
<div class="t" style="left:4.399999999999977px;top:6.90px;font-size:14.8px;color:#111111;">Мука, полуфабрикаты мучные</div>
</div>
<div class="t" style="left:319.79999999999995px;top:248.35px;font-size:14.44px;color:#111111;">4.55.7</div>
<div style="position:absolute;left:133.5px;top:267.4px;width:182.0px;height:26.25px;overflow:hidden">
<div class="t" style="left:4.399999999999977px;top:7.07px;font-size:14.59px;color:#111111;">Орехи,сухофрукты</div>
</div>
<div class="t" style="left:319.79999999999995px;top:274.60px;font-size:14.44px;color:#111111;">4.55.8</div>
<div style="position:absolute;left:133.5px;top:293.65px;width:182.0px;height:26.25px;overflow:hidden">
<div class="t" style="left:4.399999999999977px;top:6.72px;font-size:15.01px;color:#111111;">Пищевые добавки</div>
</div>
<div class="t" style="left:319.79999999999995px;top:300.85px;font-size:14.44px;color:#111111;">4.55.9</div>
<div style="position:absolute;left:133.5px;top:319.9px;width:182.0px;height:26.25px;overflow:hidden">
<div class="t" style="left:4.399999999999977px;top:6.70px;font-size:15.03px;color:#111111;">Приправы, пряности</div>
</div>
<div class="t" style="left:319.79999999999995px;top:327.10px;font-size:14.44px;color:#111111;">4.55.10</div>
<div style="position:absolute;left:133.5px;top:346.15px;width:182.0px;height:26.25px;overflow:hidden">
<div class="t" style="left:4.399999999999977px;top:6.90px;font-size:14.8px;color:#111111;">Продукты быстрого приготовления</div>
</div>
<div class="t" style="left:319.79999999999995px;top:353.35px;font-size:14.44px;color:#111111;">4.55.11</div>
<div style="position:absolute;left:133.5px;top:372.4px;width:182.0px;height:26.25px;overflow:hidden">
<div class="t" style="left:4.399999999999977px;top:6.38px;font-size:15.41px;color:#111111;">Прочие горячие напитки</div>
</div>
<div class="t" style="left:319.79999999999995px;top:379.60px;font-size:14.44px;color:#111111;">4.55.12</div>
<div style="position:absolute;left:133.5px;top:398.65px;width:182.0px;height:26.25px;overflow:hidden">
<div class="t" style="left:4.399999999999977px;top:7.62px;font-size:13.94px;color:#111111;">Сахар</div>
</div>
<div class="t" style="left:319.79999999999995px;top:405.85px;font-size:14.44px;color:#111111;">4.55.13</div>
<div style="position:absolute;left:133.5px;top:424.9px;width:182.0px;height:26.25px;overflow:hidden">
<div class="t" style="left:4.399999999999977px;top:7.18px;font-size:14.46px;color:#111111;">Сахар белый</div>
</div>
<div class="t" style="left:319.79999999999995px;top:432.10px;font-size:14.44px;color:#111111;">4.55.13.1</div>
<div style="position:absolute;left:133.5px;top:451.15px;width:182.0px;height:26.25px;overflow:hidden">
<div class="t" style="left:4.399999999999977px;top:7.13px;font-size:14.53px;color:#111111;">Сахарозаменители</div>
</div>
<div class="t" style="left:319.79999999999995px;top:458.35px;font-size:14.44px;color:#111111;">4.55.13.3</div>
<div style="position:absolute;left:133.5px;top:477.4px;width:182.0px;height:26.25px;overflow:hidden">
<div class="t" style="left:4.399999999999977px;top:7.13px;font-size:14.53px;color:#111111;">Сахар темный</div>
</div>
<div class="t" style="left:319.79999999999995px;top:484.60px;font-size:14.44px;color:#111111;">4.55.13.2</div>
<div style="position:absolute;left:133.5px;top:503.65px;width:182.0px;height:26.25px;overflow:hidden">
<div class="t" style="left:4.399999999999977px;top:6.77px;font-size:14.95px;color:#111111;">Семечки</div>
</div>
<div class="t" style="left:319.79999999999995px;top:510.85px;font-size:14.44px;color:#111111;">4.55.14</div>
<div style="position:absolute;left:133.5px;top:529.9px;width:182.0px;height:26.25px;overflow:hidden">
<div class="t" style="left:4.399999999999977px;top:7.03px;font-size:14.64px;color:#111111;">Снэки</div>
</div>
<div class="t" style="left:319.79999999999995px;top:537.10px;font-size:14.44px;color:#111111;">4.55.15</div>
<div style="position:absolute;left:133.5px;top:556.15px;width:182.0px;height:26.25px;overflow:hidden">
<div class="t" style="left:4.399999999999977px;top:7.49px;font-size:14.1px;color:#111111;">Соль</div>
</div>
<div class="t" style="left:319.79999999999995px;top:563.35px;font-size:14.44px;color:#111111;">4.55.16</div>
<div style="position:absolute;left:133.5px;top:582.4px;width:182.0px;height:26.25px;overflow:hidden">
<div class="t" style="left:4.399999999999977px;top:7.02px;font-size:14.66px;color:#111111;">Сухие завтраки, мюсли</div>
</div>
<div class="t" style="left:319.79999999999995px;top:589.60px;font-size:14.44px;color:#111111;">4.55.17</div>
<div style="position:absolute;left:133.5px;top:608.65px;width:182.0px;height:26.25px;overflow:hidden">
<div class="t" style="left:4.399999999999977px;top:6.74px;font-size:14.99px;color:#111111;">Уксус</div>
</div>
<div class="t" style="left:319.79999999999995px;top:615.85px;font-size:14.44px;color:#111111;">4.55.18</div>
<div style="position:absolute;left:133.5px;top:634.9px;width:182.0px;height:26.25px;overflow:hidden">
<div class="t" style="left:4.399999999999977px;top:6.65px;font-size:15.09px;color:#111111;">Чай и чайные напитки</div>
</div>
<div class="t" style="left:319.79999999999995px;top:642.10px;font-size:14.44px;color:#111111;">4.55.20</div>
<svg style="position:absolute;left:0;top:0" width="485" height="663" fill="none"><rect x="423.65" y="11.375000000000005" width="13.7" height="13.3" rx="2.6" fill="#fff" stroke="#727272" stroke-width="1.3"/><rect x="460.65" y="11.375000000000005" width="13.7" height="13.3" rx="2.6" fill="#fff" stroke="#727272" stroke-width="1.3"/><rect x="423.65" y="37.62499999999998" width="13.7" height="13.3" rx="2.6" fill="#fff" stroke="#727272" stroke-width="1.3"/><rect x="460.65" y="37.62499999999998" width="13.7" height="13.3" rx="2.6" fill="#fff" stroke="#727272" stroke-width="1.3"/><rect x="423.65" y="63.87499999999998" width="13.7" height="13.3" rx="2.6" fill="#fff" stroke="#727272" stroke-width="1.3"/><rect x="460.65" y="63.87499999999998" width="13.7" height="13.3" rx="2.6" fill="#fff" stroke="#727272" stroke-width="1.3"/><rect x="423.65" y="90.12499999999999" width="13.7" height="13.3" rx="2.6" fill="#fff" stroke="#727272" stroke-width="1.3"/><rect x="460.65" y="90.12499999999999" width="13.7" height="13.3" rx="2.6" fill="#fff" stroke="#727272" stroke-width="1.3"/><rect x="423.65" y="116.37499999999999" width="13.7" height="13.3" rx="2.6" fill="#fff" stroke="#727272" stroke-width="1.3"/><rect x="460.65" y="116.37499999999999" width="13.7" height="13.3" rx="2.6" fill="#fff" stroke="#727272" stroke-width="1.3"/><rect x="423.65" y="142.62499999999997" width="13.7" height="13.3" rx="2.6" fill="#fff" stroke="#727272" stroke-width="1.3"/><rect x="460.65" y="142.62499999999997" width="13.7" height="13.3" rx="2.6" fill="#fff" stroke="#727272" stroke-width="1.3"/><rect x="423.65" y="168.87499999999997" width="13.7" height="13.3" rx="2.6" fill="#fff" stroke="#727272" stroke-width="1.3"/><rect x="460.65" y="168.87499999999997" width="13.7" height="13.3" rx="2.6" fill="#fff" stroke="#727272" stroke-width="1.3"/><rect x="423.65" y="195.12499999999997" width="13.7" height="13.3" rx="2.6" fill="#fff" stroke="#727272" stroke-width="1.3"/><rect x="460.65" y="195.12499999999997" width="13.7" height="13.3" rx="2.6" fill="#fff" stroke="#727272" stroke-width="1.3"/><rect x="423.65" y="221.37499999999997" width="13.7" height="13.3" rx="2.6" fill="#fff" stroke="#727272" stroke-width="1.3"/><rect x="460.65" y="221.37499999999997" width="13.7" height="13.3" rx="2.6" fill="#fff" stroke="#727272" stroke-width="1.3"/><rect x="423.65" y="247.62499999999997" width="13.7" height="13.3" rx="2.6" fill="#fff" stroke="#727272" stroke-width="1.3"/><rect x="460.65" y="247.62499999999997" width="13.7" height="13.3" rx="2.6" fill="#fff" stroke="#727272" stroke-width="1.3"/><rect x="423.65" y="273.87499999999994" width="13.7" height="13.3" rx="2.6" fill="#fff" stroke="#727272" stroke-width="1.3"/><rect x="460.65" y="273.87499999999994" width="13.7" height="13.3" rx="2.6" fill="#fff" stroke="#727272" stroke-width="1.3"/><rect x="423.65" y="300.12499999999994" width="13.7" height="13.3" rx="2.6" fill="#fff" stroke="#727272" stroke-width="1.3"/><rect x="460.65" y="300.12499999999994" width="13.7" height="13.3" rx="2.6" fill="#fff" stroke="#727272" stroke-width="1.3"/><rect x="423.65" y="326.37499999999994" width="13.7" height="13.3" rx="2.6" fill="#fff" stroke="#727272" stroke-width="1.3"/><rect x="460.65" y="326.37499999999994" width="13.7" height="13.3" rx="2.6" fill="#fff" stroke="#727272" stroke-width="1.3"/><rect x="423.65" y="352.62499999999994" width="13.7" height="13.3" rx="2.6" fill="#fff" stroke="#727272" stroke-width="1.3"/><rect x="460.65" y="352.62499999999994" width="13.7" height="13.3" rx="2.6" fill="#fff" stroke="#727272" stroke-width="1.3"/><rect x="423.65" y="378.87499999999994" width="13.7" height="13.3" rx="2.6" fill="#fff" stroke="#727272" stroke-width="1.3"/><rect x="460.65" y="378.87499999999994" width="13.7" height="13.3" rx="2.6" fill="#fff" stroke="#727272" stroke-width="1.3"/><rect x="423.0" y="404.47499999999997" width="15" height="14.6" rx="3" fill="#0a7aff"/><path d="M425.9 412.67499999999995 L429.0 415.775 L435.0 407.775" stroke="#fff" stroke-width="2" fill="none" stroke-linecap="butt" stroke-linejoin="miter"/><rect x="460.65" y="405.12499999999994" width="13.7" height="13.3" rx="2.6" fill="#fff" stroke="#727272" stroke-width="1.3"/><rect x="423.0" y="430.72499999999997" width="15" height="14.6" rx="3" fill="#0a7aff"/><path d="M425.9 438.92499999999995 L429.0 442.025 L435.0 434.025" stroke="#fff" stroke-width="2" fill="none" stroke-linecap="butt" stroke-linejoin="miter"/><rect x="460.0" y="430.72499999999997" width="15" height="14.6" rx="3" fill="#0a7aff"/><path d="M462.9 438.92499999999995 L466.0 442.025 L472.0 434.025" stroke="#fff" stroke-width="2" fill="none" stroke-linecap="butt" stroke-linejoin="miter"/><rect x="423.0" y="456.97499999999997" width="15" height="14.6" rx="3" fill="#0a7aff"/><path d="M425.9 465.17499999999995 L429.0 468.275 L435.0 460.275" stroke="#fff" stroke-width="2" fill="none" stroke-linecap="butt" stroke-linejoin="miter"/><rect x="460.65" y="457.62499999999994" width="13.7" height="13.3" rx="2.6" fill="#fff" stroke="#727272" stroke-width="1.3"/><rect x="423.0" y="483.22499999999997" width="15" height="14.6" rx="3" fill="#0a7aff"/><path d="M425.9 491.42499999999995 L429.0 494.525 L435.0 486.525" stroke="#fff" stroke-width="2" fill="none" stroke-linecap="butt" stroke-linejoin="miter"/><rect x="460.65" y="483.87499999999994" width="13.7" height="13.3" rx="2.6" fill="#fff" stroke="#727272" stroke-width="1.3"/><rect x="423.65" y="510.12499999999994" width="13.7" height="13.3" rx="2.6" fill="#fff" stroke="#727272" stroke-width="1.3"/><rect x="460.65" y="510.12499999999994" width="13.7" height="13.3" rx="2.6" fill="#fff" stroke="#727272" stroke-width="1.3"/><rect x="423.65" y="536.375" width="13.7" height="13.3" rx="2.6" fill="#fff" stroke="#727272" stroke-width="1.3"/><rect x="460.65" y="536.375" width="13.7" height="13.3" rx="2.6" fill="#fff" stroke="#727272" stroke-width="1.3"/><rect x="423.65" y="562.625" width="13.7" height="13.3" rx="2.6" fill="#fff" stroke="#727272" stroke-width="1.3"/><rect x="460.65" y="562.625" width="13.7" height="13.3" rx="2.6" fill="#fff" stroke="#727272" stroke-width="1.3"/><rect x="423.65" y="588.875" width="13.7" height="13.3" rx="2.6" fill="#fff" stroke="#727272" stroke-width="1.3"/><rect x="460.65" y="588.875" width="13.7" height="13.3" rx="2.6" fill="#fff" stroke="#727272" stroke-width="1.3"/><rect x="423.65" y="615.125" width="13.7" height="13.3" rx="2.6" fill="#fff" stroke="#727272" stroke-width="1.3"/><rect x="460.65" y="615.125" width="13.7" height="13.3" rx="2.6" fill="#fff" stroke="#727272" stroke-width="1.3"/><rect x="423.65" y="641.375" width="13.7" height="13.3" rx="2.6" fill="#fff" stroke="#727272" stroke-width="1.3"/><rect x="460.65" y="641.375" width="13.7" height="13.3" rx="2.6" fill="#fff" stroke="#727272" stroke-width="1.3"/></svg>
</div>
<div style="position:absolute;left:865px;top:290px;width:10px;height:399px;background:#dcdcdc"></div>
<div style="position:absolute;left:896px;top:185px;width:1009px;height:710px;background:#ffffff;border:1px solid #1a88c4;border-radius:3px"></div>
<div style="position:absolute;left:897px;top:186px;width:1007px;height:43.5px;background:#f1f1f1;border-radius:2px 2px 0 0"></div>
<div style="position:absolute;left:897px;top:229px;width:1007px;height:1px;background:#dedede"></div>
<div style="position:absolute;left:1370px;top:186px;width:1px;height:43.5px;background:#e2e2e2"></div>
<div style="position:absolute;left:1538.5px;top:186px;width:1px;height:43.5px;background:#e2e2e2"></div>
<div style="position:absolute;left:1783px;top:186px;width:1px;height:43.5px;background:#e2e2e2"></div>
<div style="position:absolute;left:1820px;top:186px;width:1px;height:43.5px;background:#e2e2e2"></div>
<div style="position:absolute;left:1858px;top:186px;width:1px;height:43.5px;background:#e2e2e2"></div>
<div style="position:absolute;left:1894px;top:186px;width:1px;height:43.5px;background:#e2e2e2"></div>
<svg style="position:absolute;left:0;top:0" width="1919" height="240" fill="none"><circle cx="1082.3" cy="207.3" r="6.6" stroke="#63c8ee" stroke-width="1.4" fill="#f1f1f1"/><path d="M1079.3 208.60000000000002 L1082.3 205.60000000000002 L1085.3 208.60000000000002" stroke="#555" stroke-width="1.6" fill="none"/><path d="M1813.5 229 L1819.5 223 V229 Z" fill="#1d8ac4"/><path d="M1851.5 229 L1857.5 223 V229 Z" fill="#1d8ac4"/></svg>
<div class="t" style="left:1093px;top:200.22px;font-size:15.1px;color:#111111;">Наименование</div>
<div class="t" style="left:1155px;width:600px;text-align:center;top:200.30px;font-size:15px;color:#111111;">Код</div>
<div class="t" style="left:1361px;width:600px;text-align:center;top:200.30px;font-size:15px;color:#111111;">Штрихкод</div>
<div style="position:absolute;left:1784px;top:186px;width:36px;height:43px;overflow:hidden">
<div class="t" style="left:2px;top:3.79px;font-size:14.9px;color:#111111;">Включ</div>
<div class="t" style="left:-282.0px;width:600px;text-align:center;top:23.89px;font-size:14.9px;color:#111111;">в</div>
</div>
<div style="position:absolute;left:1821px;top:186px;width:37px;height:43px;overflow:hidden">
<div class="t" style="left:2px;top:3.79px;font-size:14.9px;color:#111111;">Исключ</div>
<div class="t" style="left:-281.5px;width:600px;text-align:center;top:23.89px;font-size:14.9px;color:#111111;">из</div>
</div>
<div style="position:absolute;left:1859px;top:186px;width:35px;height:43px;overflow:hidden">
<div class="t" style="left:2px;top:3.79px;font-size:14.9px;color:#111111;">Контроль</div>
<div class="t" style="left:2px;top:23.89px;font-size:14.9px;color:#111111;">розн</div>
</div>
<div style="position:absolute;left:897px;top:229.5px;width:1007px;height:664.5px;overflow:hidden">
<div style="position:absolute;left:960px;top:-8.849999999999994px;width:36px;height:25.75px;background:#80c3fe"></div>
<div style="position:absolute;left:960px;top:17.400000000000006px;width:36px;height:25.75px;background:#80c3fe"></div>
<div style="position:absolute;left:960px;top:43.64999999999998px;width:36px;height:25.75px;background:#80c3fe"></div>
<div style="position:absolute;left:960px;top:69.89999999999998px;width:36px;height:25.75px;background:#80c3fe"></div>
<div style="position:absolute;left:960px;top:96.14999999999998px;width:36px;height:25.75px;background:#80c3fe"></div>
<div style="position:absolute;left:960px;top:122.39999999999998px;width:36px;height:25.75px;background:#80c3fe"></div>
<div style="position:absolute;left:960px;top:148.64999999999998px;width:36px;height:25.75px;background:#80c3fe"></div>
<div style="position:absolute;left:960px;top:174.89999999999998px;width:36px;height:25.75px;background:#80c3fe"></div>
<div style="position:absolute;left:1px;top:201.14999999999998px;width:995px;height:25.75px;background:#d3e4e8"></div>
<div style="position:absolute;left:960px;top:201.14999999999998px;width:36px;height:25.75px;background:#52c0e6"></div>
<div style="position:absolute;left:960px;top:227.39999999999998px;width:36px;height:25.75px;background:#80c3fe"></div>
<div style="position:absolute;left:960px;top:253.64999999999998px;width:36px;height:25.75px;background:#80c3fe"></div>
<div style="position:absolute;left:960px;top:279.9px;width:36px;height:25.75px;background:#80c3fe"></div>
<div style="position:absolute;left:960px;top:306.15px;width:36px;height:25.75px;background:#80c3fe"></div>
<div style="position:absolute;left:960px;top:332.4px;width:36px;height:25.75px;background:#80c3fe"></div>
<div style="position:absolute;left:960px;top:358.65px;width:36px;height:25.75px;background:#80c3fe"></div>
<div style="position:absolute;left:960px;top:384.9px;width:36px;height:25.75px;background:#80c3fe"></div>
<div style="position:absolute;left:960px;top:411.15px;width:36px;height:25.75px;background:#80c3fe"></div>
<div style="position:absolute;left:960px;top:437.4px;width:36px;height:25.75px;background:#80c3fe"></div>
<div style="position:absolute;left:960px;top:463.65px;width:36px;height:25.75px;background:#80c3fe"></div>
<div style="position:absolute;left:960px;top:489.9px;width:36px;height:25.75px;background:#80c3fe"></div>
<div style="position:absolute;left:960px;top:516.15px;width:36px;height:25.75px;background:#80c3fe"></div>
<div style="position:absolute;left:960px;top:542.4px;width:36px;height:25.75px;background:#80c3fe"></div>
<div style="position:absolute;left:960px;top:568.65px;width:36px;height:25.75px;background:#80c3fe"></div>
<div style="position:absolute;left:960px;top:594.9px;width:36px;height:25.75px;background:#80c3fe"></div>
<div style="position:absolute;left:960px;top:621.15px;width:36px;height:25.75px;background:#80c3fe"></div>
<div style="position:absolute;left:960px;top:647.4px;width:36px;height:25.75px;background:#80c3fe"></div>
<div style="position:absolute;left:1px;top:-9.349999999999994px;width:995px;height:1px;background:#e4e4e4"></div>
<div style="position:absolute;left:1px;top:16.900000000000006px;width:995px;height:1px;background:#e4e4e4"></div>
<div style="position:absolute;left:1px;top:43.14999999999998px;width:995px;height:1px;background:#e4e4e4"></div>
<div style="position:absolute;left:1px;top:69.39999999999998px;width:995px;height:1px;background:#e4e4e4"></div>
<div style="position:absolute;left:1px;top:95.64999999999998px;width:995px;height:1px;background:#e4e4e4"></div>
<div style="position:absolute;left:1px;top:121.89999999999998px;width:995px;height:1px;background:#e4e4e4"></div>
<div style="position:absolute;left:1px;top:148.14999999999998px;width:995px;height:1px;background:#e4e4e4"></div>
<div style="position:absolute;left:1px;top:174.39999999999998px;width:995px;height:1px;background:#e4e4e4"></div>
<div style="position:absolute;left:1px;top:200.64999999999998px;width:995px;height:1px;background:#e4e4e4"></div>
<div style="position:absolute;left:1px;top:226.89999999999998px;width:995px;height:1px;background:#e4e4e4"></div>
<div style="position:absolute;left:1px;top:253.14999999999998px;width:995px;height:1px;background:#e4e4e4"></div>
<div style="position:absolute;left:1px;top:279.4px;width:995px;height:1px;background:#e4e4e4"></div>
<div style="position:absolute;left:1px;top:305.65px;width:995px;height:1px;background:#e4e4e4"></div>
<div style="position:absolute;left:1px;top:331.9px;width:995px;height:1px;background:#e4e4e4"></div>
<div style="position:absolute;left:1px;top:358.15px;width:995px;height:1px;background:#e4e4e4"></div>
<div style="position:absolute;left:1px;top:384.4px;width:995px;height:1px;background:#e4e4e4"></div>
<div style="position:absolute;left:1px;top:410.65px;width:995px;height:1px;background:#e4e4e4"></div>
<div style="position:absolute;left:1px;top:436.9px;width:995px;height:1px;background:#e4e4e4"></div>
<div style="position:absolute;left:1px;top:463.15px;width:995px;height:1px;background:#e4e4e4"></div>
<div style="position:absolute;left:1px;top:489.4px;width:995px;height:1px;background:#e4e4e4"></div>
<div style="position:absolute;left:1px;top:515.65px;width:995px;height:1px;background:#e4e4e4"></div>
<div style="position:absolute;left:1px;top:541.9px;width:995px;height:1px;background:#e4e4e4"></div>
<div style="position:absolute;left:1px;top:568.15px;width:995px;height:1px;background:#e4e4e4"></div>
<div style="position:absolute;left:1px;top:594.4px;width:995px;height:1px;background:#e4e4e4"></div>
<div style="position:absolute;left:1px;top:620.65px;width:995px;height:1px;background:#e4e4e4"></div>
<div style="position:absolute;left:1px;top:646.9px;width:995px;height:1px;background:#e4e4e4"></div>
<div style="position:absolute;left:1px;top:673.15px;width:995px;height:1px;background:#e4e4e4"></div>
<div style="position:absolute;left:473px;top:0px;width:1px;height:700px;background:#e6e6e6"></div>
<div style="position:absolute;left:641.5px;top:0px;width:1px;height:700px;background:#e6e6e6"></div>
<div style="position:absolute;left:884.5px;top:0px;width:1px;height:700px;background:#e6e6e6"></div>
<div style="position:absolute;left:922.5px;top:0px;width:1px;height:700px;background:#e6e6e6"></div>
<div style="position:absolute;left:473px;top:201.14999999999998px;width:168.5px;height:26px;border:1px solid #2a8cc4"></div>
<div class="t" style="left:4.2999999999999545px;top:-1.80px;font-size:14.24px;color:#111111;">ПОДСЛАСТИТЕЛЬ СЛАДИС 400 ТАБ</div>
<div class="t" style="left:478.5999999999999px;top:-1.97px;font-size:14.44px;color:#111111;">769405</div>
<div class="t" style="left:646px;top:-1.94px;font-size:14.4px;color:#111111;">4607020210035</div>
<div class="t" style="left:4.2999999999999545px;top:24.45px;font-size:14.24px;color:#111111;">ПОДСЛАСТИТЕЛЬ СЛАДИС 667 ТАБ</div>
<div class="t" style="left:478.5999999999999px;top:24.28px;font-size:14.44px;color:#111111;">584179</div>
<div class="t" style="left:646px;top:24.31px;font-size:14.4px;color:#111111;">4607020210042</div>
<div class="t" style="left:4.2999999999999545px;top:50.76px;font-size:14.16px;color:#111111;">ПОДСЛАСТИТЕЛЬ СЛАСТЬ-100 12Г</div>
<div class="t" style="left:478.5999999999999px;top:50.53px;font-size:14.44px;color:#111111;">640367</div>
<div class="t" style="left:646px;top:50.56px;font-size:14.4px;color:#111111;">4607149090020</div>
<div class="t" style="left:4.2999999999999545px;top:76.99px;font-size:14.19px;color:#111111;">ПОДСЛАСТИТЕЛЬ СЛАСТЬ-100 650ТАБЛ.</div>
<div class="t" style="left:478.5999999999999px;top:76.78px;font-size:14.44px;color:#111111;">638208</div>
<div class="t" style="left:646px;top:76.81px;font-size:14.4px;color:#111111;">4607149090112</div>
<div class="t" style="left:4.2999999999999545px;top:103.09px;font-size:14.36px;color:#111111;">ПОДСЛАСТИТЕЛЬ СТОЛОВЫЙ ДАМИРА 350ТАБЛ.</div>
<div class="t" style="left:478.5999999999999px;top:103.03px;font-size:14.44px;color:#111111;">588329</div>
<div class="t" style="left:646px;top:103.06px;font-size:14.4px;color:#111111;">4814633000735</div>
<div class="t" style="left:4.2999999999999545px;top:129.81px;font-size:13.81px;color:#111111;">ПОДСЛАСТИТЕЛЬ ФИТФОРС СТЕВИЯ 50Г</div>
<div class="t" style="left:478.5999999999999px;top:129.28px;font-size:14.44px;color:#111111;">748403</div>
<div class="t" style="left:646px;top:129.31px;font-size:14.4px;color:#111111;">4815319000254</div>
<div class="t" style="left:4.2999999999999545px;top:155.67px;font-size:14.27px;color:#111111;">ПОДСЛАСТИТЕЛЬ ХУКСОЛ 1200ШТ</div>
<div class="t" style="left:478.5999999999999px;top:155.53px;font-size:14.44px;color:#111111;">701043</div>
<div class="t" style="left:646px;top:155.56px;font-size:14.4px;color:#111111;">4008102003291</div>
<div class="t" style="left:4.2999999999999545px;top:181.97px;font-size:14.21px;color:#111111;">ПОДСЛАСТИТЕЛЬ ХУКСОЛ 650ШТ</div>
<div class="t" style="left:478.5999999999999px;top:181.78px;font-size:14.44px;color:#111111;">701080</div>
<div class="t" style="left:646px;top:181.81px;font-size:14.4px;color:#111111;">4000445003457</div>
<div class="t" style="left:4.2999999999999545px;top:208.75px;font-size:13.59px;color:#111111;">ПУДРА САХАРНАЯ 350Г</div>
<div class="t" style="left:478.5999999999999px;top:208.03px;font-size:14.44px;color:#111111;">570537</div>
<div class="t" style="left:646px;top:208.06px;font-size:14.4px;color:#111111;">4810272002703</div>
<div class="t" style="left:4.2999999999999545px;top:234.47px;font-size:14.21px;color:#111111;">ПУДРА САХАРНАЯ ГУРМИНА 150Г</div>
<div class="t" style="left:478.5999999999999px;top:234.28px;font-size:14.44px;color:#111111;">756153</div>
<div class="t" style="left:646px;top:234.31px;font-size:14.4px;color:#111111;">4815477008963</div>
<div class="t" style="left:4.2999999999999545px;top:260.51px;font-size:14.46px;color:#111111;">ПУДРА САХАРНАЯ ГУРМИНА КАРДАМОН/ВАН.40Г</div>
<div class="t" style="left:478.5999999999999px;top:260.53px;font-size:14.44px;color:#111111;">756154</div>
<div class="t" style="left:646px;top:260.56px;font-size:14.4px;color:#111111;">4815477008932</div>
<div class="t" style="left:4.2999999999999545px;top:286.96px;font-size:14.22px;color:#111111;">ПУДРА САХАРНАЯ ГУРМИНА КОРИЦА/ЯБЛ.40Г</div>
<div class="t" style="left:478.5999999999999px;top:286.78px;font-size:14.44px;color:#111111;">756155</div>
<div class="t" style="left:646px;top:286.81px;font-size:14.4px;color:#111111;">4815477008901</div>
<div class="t" style="left:4.2999999999999545px;top:313.04px;font-size:14.43px;color:#111111;">ПУДРА САХАРНАЯ ЛИДКОН 200Г</div>
<div class="t" style="left:478.5999999999999px;top:313.03px;font-size:14.44px;color:#111111;">368807</div>
<div class="t" style="left:646px;top:313.06px;font-size:14.4px;color:#111111;">4810113007409</div>
<div class="t" style="left:4.2999999999999545px;top:339.52px;font-size:14.15px;color:#111111;">ПУДРА САХАРНАЯ С ВАНИЛЬЮ 200Г</div>
<div class="t" style="left:478.5999999999999px;top:339.28px;font-size:14.44px;color:#111111;">550725</div>
<div class="t" style="left:646px;top:339.31px;font-size:14.4px;color:#111111;">4810272002475</div>
<div class="t" style="left:4.2999999999999545px;top:365.84px;font-size:14.07px;color:#111111;">ПУДРА САХАРНАЯ С КОРИЦЕЙ 200Г</div>
<div class="t" style="left:478.5999999999999px;top:365.53px;font-size:14.44px;color:#111111;">550724</div>
<div class="t" style="left:646px;top:365.56px;font-size:14.4px;color:#111111;">4810272002482</div>
<div class="t" style="left:4.2999999999999545px;top:392.30px;font-size:13.82px;color:#111111;">САХАР 1КГ</div>
<div class="t" style="left:478.5999999999999px;top:391.78px;font-size:14.44px;color:#111111;">621080</div>
<div class="t" style="left:646px;top:391.81px;font-size:14.4px;color:#111111;">4810272002888</div>
<div class="t" style="left:4.2999999999999545px;top:418.55px;font-size:13.82px;color:#111111;">САХАР 1КГ</div>
<div class="t" style="left:478.5999999999999px;top:418.03px;font-size:14.44px;color:#111111;">623033</div>
<div class="t" style="left:646px;top:418.06px;font-size:14.4px;color:#111111;">4810026000306</div>
<div class="t" style="left:4.2999999999999545px;top:444.80px;font-size:13.82px;color:#111111;">САХАР 1КГ</div>
<div class="t" style="left:478.5999999999999px;top:444.28px;font-size:14.44px;color:#111111;">632043</div>
<div class="t" style="left:646px;top:444.31px;font-size:14.4px;color:#111111;">4607046120776</div>
<div class="t" style="left:4.2999999999999545px;top:471.02px;font-size:13.86px;color:#111111;">САХАР БЕЛЫЙ КРИСТ.1КГ</div>
<div class="t" style="left:478.5999999999999px;top:470.53px;font-size:14.44px;color:#111111;">668477</div>
<div class="t" style="left:646px;top:470.56px;font-size:14.4px;color:#111111;">4620009581247</div>
<div class="t" style="left:4.2999999999999545px;top:497.14px;font-size:14.01px;color:#111111;">САХАР БЕЛЫЙ КРИСТАЛЛИЧ.1КГ</div>
<div class="t" style="left:478.5999999999999px;top:496.78px;font-size:14.44px;color:#111111;">724218</div>
<div class="t" style="left:646px;top:496.81px;font-size:14.4px;color:#111111;">4810026000542</div>
<div class="t" style="left:4.2999999999999545px;top:523.27px;font-size:14.15px;color:#111111;">САХАР БЕЛЫЙ КРИСТАЛЛИЧЕСКИЙ 10Г</div>
<div class="t" style="left:478.5999999999999px;top:523.03px;font-size:14.44px;color:#111111;">647602</div>
<div class="t" style="left:646px;top:523.06px;font-size:14.4px;color:#111111;">4810272003168</div>
<div class="t" style="left:4.2999999999999545px;top:549.50px;font-size:14.18px;color:#111111;">САХАР БЕЛЫЙ КРИСТАЛЛИЧЕСКИЙ 10КГ</div>
<div class="t" style="left:478.5999999999999px;top:549.28px;font-size:14.44px;color:#111111;">705661</div>
<div class="t" style="left:646px;top:549.31px;font-size:14.4px;color:#111111;">4810026000429</div>
<div class="t" style="left:4.2999999999999545px;top:575.76px;font-size:14.16px;color:#111111;">САХАР БЕЛЫЙ КРИСТАЛЛИЧЕСКИЙ 1КГ</div>
<div class="t" style="left:478.5999999999999px;top:575.53px;font-size:14.44px;color:#111111;">609448</div>
<div class="t" style="left:646px;top:575.56px;font-size:14.4px;color:#111111;">4810613000412</div>
<div class="t" style="left:4.2999999999999545px;top:602.01px;font-size:14.16px;color:#111111;">САХАР БЕЛЫЙ КРИСТАЛЛИЧЕСКИЙ 1КГ</div>
<div class="t" style="left:478.5999999999999px;top:601.78px;font-size:14.44px;color:#111111;">642800</div>
<div class="t" style="left:646px;top:601.81px;font-size:14.4px;color:#111111;">4810026000481</div>
<div class="t" style="left:4.2999999999999545px;top:628.25px;font-size:14.18px;color:#111111;">САХАР БЕЛЫЙ КРИСТАЛЛИЧЕСКИЙ 25КГ</div>
<div class="t" style="left:478.5999999999999px;top:628.03px;font-size:14.44px;color:#111111;">765405</div>
<div class="t" style="left:646px;top:628.06px;font-size:14.4px;color:#111111;">4810721000281</div>
<div class="t" style="left:4.2999999999999545px;top:654.50px;font-size:14.18px;color:#111111;">САХАР БЕЛЫЙ КРИСТАЛЛИЧЕСКИЙ 25КГ</div>
<div class="t" style="left:478.5999999999999px;top:654.28px;font-size:14.44px;color:#111111;">765406</div>
<div class="t" style="left:646px;top:654.31px;font-size:14.4px;color:#111111;">4810613000504</div>
<svg style="position:absolute;left:0;top:0" width="1007" height="700" fill="none"><rect x="896.0" y="-4.350000000000011" width="15" height="14.6" rx="3" fill="#0a7aff"/><path d="M898.9 3.849999999999988 L902.0 6.9499999999999895 L908.0 -1.0500000000000114" stroke="#fff" stroke-width="2" fill="none" stroke-linecap="butt" stroke-linejoin="miter"/><rect x="934.5500000000001" y="-3.7000000000000113" width="13.7" height="13.3" rx="2.6" fill="#fff" stroke="#727272" stroke-width="1.3"/><rect x="970.9000000000001" y="-4.350000000000011" width="15" height="14.6" rx="3" fill="#0a7aff"/><path d="M973.8000000000001 3.849999999999988 L976.9000000000001 6.9499999999999895 L982.9000000000001 -1.0500000000000114" stroke="#fff" stroke-width="2" fill="none" stroke-linecap="butt" stroke-linejoin="miter"/><rect x="896.0" y="21.899999999999988" width="15" height="14.6" rx="3" fill="#0a7aff"/><path d="M898.9 30.099999999999987 L902.0 33.19999999999999 L908.0 25.19999999999999" stroke="#fff" stroke-width="2" fill="none" stroke-linecap="butt" stroke-linejoin="miter"/><rect x="934.5500000000001" y="22.549999999999986" width="13.7" height="13.3" rx="2.6" fill="#fff" stroke="#727272" stroke-width="1.3"/><rect x="970.9000000000001" y="21.899999999999988" width="15" height="14.6" rx="3" fill="#0a7aff"/><path d="M973.8000000000001 30.099999999999987 L976.9000000000001 33.19999999999999 L982.9000000000001 25.19999999999999" stroke="#fff" stroke-width="2" fill="none" stroke-linecap="butt" stroke-linejoin="miter"/><rect x="896.0" y="48.14999999999999" width="15" height="14.6" rx="3" fill="#0a7aff"/><path d="M898.9 56.349999999999994 L902.0 59.44999999999999 L908.0 51.44999999999999" stroke="#fff" stroke-width="2" fill="none" stroke-linecap="butt" stroke-linejoin="miter"/><rect x="934.5500000000001" y="48.79999999999999" width="13.7" height="13.3" rx="2.6" fill="#fff" stroke="#727272" stroke-width="1.3"/><rect x="970.9000000000001" y="48.14999999999999" width="15" height="14.6" rx="3" fill="#0a7aff"/><path d="M973.8000000000001 56.349999999999994 L976.9000000000001 59.44999999999999 L982.9000000000001 51.44999999999999" stroke="#fff" stroke-width="2" fill="none" stroke-linecap="butt" stroke-linejoin="miter"/><rect x="896.0" y="74.39999999999999" width="15" height="14.6" rx="3" fill="#0a7aff"/><path d="M898.9 82.6 L902.0 85.69999999999999 L908.0 77.69999999999999" stroke="#fff" stroke-width="2" fill="none" stroke-linecap="butt" stroke-linejoin="miter"/><rect x="934.5500000000001" y="75.05" width="13.7" height="13.3" rx="2.6" fill="#fff" stroke="#727272" stroke-width="1.3"/><rect x="970.9000000000001" y="74.39999999999999" width="15" height="14.6" rx="3" fill="#0a7aff"/><path d="M973.8000000000001 82.6 L976.9000000000001 85.69999999999999 L982.9000000000001 77.69999999999999" stroke="#fff" stroke-width="2" fill="none" stroke-linecap="butt" stroke-linejoin="miter"/><rect x="896.0" y="100.64999999999999" width="15" height="14.6" rx="3" fill="#0a7aff"/><path d="M898.9 108.85 L902.0 111.94999999999999 L908.0 103.94999999999999" stroke="#fff" stroke-width="2" fill="none" stroke-linecap="butt" stroke-linejoin="miter"/><rect x="934.5500000000001" y="101.3" width="13.7" height="13.3" rx="2.6" fill="#fff" stroke="#727272" stroke-width="1.3"/><rect x="970.9000000000001" y="100.64999999999999" width="15" height="14.6" rx="3" fill="#0a7aff"/><path d="M973.8000000000001 108.85 L976.9000000000001 111.94999999999999 L982.9000000000001 103.94999999999999" stroke="#fff" stroke-width="2" fill="none" stroke-linecap="butt" stroke-linejoin="miter"/><rect x="896.0" y="126.89999999999999" width="15" height="14.6" rx="3" fill="#0a7aff"/><path d="M898.9 135.1 L902.0 138.2 L908.0 130.2" stroke="#fff" stroke-width="2" fill="none" stroke-linecap="butt" stroke-linejoin="miter"/><rect x="934.5500000000001" y="127.55" width="13.7" height="13.3" rx="2.6" fill="#fff" stroke="#727272" stroke-width="1.3"/><rect x="970.9000000000001" y="126.89999999999999" width="15" height="14.6" rx="3" fill="#0a7aff"/><path d="M973.8000000000001 135.1 L976.9000000000001 138.2 L982.9000000000001 130.2" stroke="#fff" stroke-width="2" fill="none" stroke-linecap="butt" stroke-linejoin="miter"/><rect x="896.0" y="153.14999999999998" width="15" height="14.6" rx="3" fill="#0a7aff"/><path d="M898.9 161.34999999999997 L902.0 164.45 L908.0 156.45" stroke="#fff" stroke-width="2" fill="none" stroke-linecap="butt" stroke-linejoin="miter"/><rect x="934.5500000000001" y="153.79999999999998" width="13.7" height="13.3" rx="2.6" fill="#fff" stroke="#727272" stroke-width="1.3"/><rect x="970.9000000000001" y="153.14999999999998" width="15" height="14.6" rx="3" fill="#0a7aff"/><path d="M973.8000000000001 161.34999999999997 L976.9000000000001 164.45 L982.9000000000001 156.45" stroke="#fff" stroke-width="2" fill="none" stroke-linecap="butt" stroke-linejoin="miter"/><rect x="896.0" y="179.39999999999998" width="15" height="14.6" rx="3" fill="#0a7aff"/><path d="M898.9 187.59999999999997 L902.0 190.7 L908.0 182.7" stroke="#fff" stroke-width="2" fill="none" stroke-linecap="butt" stroke-linejoin="miter"/><rect x="934.5500000000001" y="180.04999999999998" width="13.7" height="13.3" rx="2.6" fill="#fff" stroke="#727272" stroke-width="1.3"/><rect x="970.9000000000001" y="179.39999999999998" width="15" height="14.6" rx="3" fill="#0a7aff"/><path d="M973.8000000000001 187.59999999999997 L976.9000000000001 190.7 L982.9000000000001 182.7" stroke="#fff" stroke-width="2" fill="none" stroke-linecap="butt" stroke-linejoin="miter"/><rect x="896.0" y="205.64999999999998" width="15" height="14.6" rx="3" fill="#0a7aff"/><path d="M898.9 213.84999999999997 L902.0 216.95 L908.0 208.95" stroke="#fff" stroke-width="2" fill="none" stroke-linecap="butt" stroke-linejoin="miter"/><rect x="933.9000000000001" y="205.64999999999998" width="15" height="14.6" rx="3" fill="#0a7aff"/><path d="M936.8000000000001 213.84999999999997 L939.9000000000001 216.95 L945.9000000000001 208.95" stroke="#fff" stroke-width="2" fill="none" stroke-linecap="butt" stroke-linejoin="miter"/><rect x="971.5500000000001" y="206.29999999999998" width="13.7" height="13.3" rx="2.6" fill="#fff" stroke="#727272" stroke-width="1.3"/><rect x="896.0" y="231.89999999999998" width="15" height="14.6" rx="3" fill="#0a7aff"/><path d="M898.9 240.09999999999997 L902.0 243.2 L908.0 235.2" stroke="#fff" stroke-width="2" fill="none" stroke-linecap="butt" stroke-linejoin="miter"/><rect x="933.9000000000001" y="231.89999999999998" width="15" height="14.6" rx="3" fill="#0a7aff"/><path d="M936.8000000000001 240.09999999999997 L939.9000000000001 243.2 L945.9000000000001 235.2" stroke="#fff" stroke-width="2" fill="none" stroke-linecap="butt" stroke-linejoin="miter"/><rect x="971.5500000000001" y="232.54999999999998" width="13.7" height="13.3" rx="2.6" fill="#fff" stroke="#727272" stroke-width="1.3"/><rect x="896.0" y="258.15" width="15" height="14.6" rx="3" fill="#0a7aff"/><path d="M898.9 266.34999999999997 L902.0 269.45 L908.0 261.45" stroke="#fff" stroke-width="2" fill="none" stroke-linecap="butt" stroke-linejoin="miter"/><rect x="933.9000000000001" y="258.15" width="15" height="14.6" rx="3" fill="#0a7aff"/><path d="M936.8000000000001 266.34999999999997 L939.9000000000001 269.45 L945.9000000000001 261.45" stroke="#fff" stroke-width="2" fill="none" stroke-linecap="butt" stroke-linejoin="miter"/><rect x="971.5500000000001" y="258.79999999999995" width="13.7" height="13.3" rx="2.6" fill="#fff" stroke="#727272" stroke-width="1.3"/><rect x="896.0" y="284.40000000000003" width="15" height="14.6" rx="3" fill="#0a7aff"/><path d="M898.9 292.6 L902.0 295.70000000000005 L908.0 287.70000000000005" stroke="#fff" stroke-width="2" fill="none" stroke-linecap="butt" stroke-linejoin="miter"/><rect x="933.9000000000001" y="284.40000000000003" width="15" height="14.6" rx="3" fill="#0a7aff"/><path d="M936.8000000000001 292.6 L939.9000000000001 295.70000000000005 L945.9000000000001 287.70000000000005" stroke="#fff" stroke-width="2" fill="none" stroke-linecap="butt" stroke-linejoin="miter"/><rect x="971.5500000000001" y="285.05" width="13.7" height="13.3" rx="2.6" fill="#fff" stroke="#727272" stroke-width="1.3"/><rect x="896.0" y="310.65000000000003" width="15" height="14.6" rx="3" fill="#0a7aff"/><path d="M898.9 318.85 L902.0 321.95000000000005 L908.0 313.95000000000005" stroke="#fff" stroke-width="2" fill="none" stroke-linecap="butt" stroke-linejoin="miter"/><rect x="933.9000000000001" y="310.65000000000003" width="15" height="14.6" rx="3" fill="#0a7aff"/><path d="M936.8000000000001 318.85 L939.9000000000001 321.95000000000005 L945.9000000000001 313.95000000000005" stroke="#fff" stroke-width="2" fill="none" stroke-linecap="butt" stroke-linejoin="miter"/><rect x="971.5500000000001" y="311.3" width="13.7" height="13.3" rx="2.6" fill="#fff" stroke="#727272" stroke-width="1.3"/><rect x="896.0" y="336.90000000000003" width="15" height="14.6" rx="3" fill="#0a7aff"/><path d="M898.9 345.1 L902.0 348.20000000000005 L908.0 340.20000000000005" stroke="#fff" stroke-width="2" fill="none" stroke-linecap="butt" stroke-linejoin="miter"/><rect x="933.9000000000001" y="336.90000000000003" width="15" height="14.6" rx="3" fill="#0a7aff"/><path d="M936.8000000000001 345.1 L939.9000000000001 348.20000000000005 L945.9000000000001 340.20000000000005" stroke="#fff" stroke-width="2" fill="none" stroke-linecap="butt" stroke-linejoin="miter"/><rect x="971.5500000000001" y="337.55" width="13.7" height="13.3" rx="2.6" fill="#fff" stroke="#727272" stroke-width="1.3"/><rect x="896.0" y="363.15000000000003" width="15" height="14.6" rx="3" fill="#0a7aff"/><path d="M898.9 371.35 L902.0 374.45000000000005 L908.0 366.45000000000005" stroke="#fff" stroke-width="2" fill="none" stroke-linecap="butt" stroke-linejoin="miter"/><rect x="933.9000000000001" y="363.15000000000003" width="15" height="14.6" rx="3" fill="#0a7aff"/><path d="M936.8000000000001 371.35 L939.9000000000001 374.45000000000005 L945.9000000000001 366.45000000000005" stroke="#fff" stroke-width="2" fill="none" stroke-linecap="butt" stroke-linejoin="miter"/><rect x="971.5500000000001" y="363.8" width="13.7" height="13.3" rx="2.6" fill="#fff" stroke="#727272" stroke-width="1.3"/><rect x="896.0" y="389.40000000000003" width="15" height="14.6" rx="3" fill="#0a7aff"/><path d="M898.9 397.6 L902.0 400.70000000000005 L908.0 392.70000000000005" stroke="#fff" stroke-width="2" fill="none" stroke-linecap="butt" stroke-linejoin="miter"/><rect x="933.9000000000001" y="389.40000000000003" width="15" height="14.6" rx="3" fill="#0a7aff"/><path d="M936.8000000000001 397.6 L939.9000000000001 400.70000000000005 L945.9000000000001 392.70000000000005" stroke="#fff" stroke-width="2" fill="none" stroke-linecap="butt" stroke-linejoin="miter"/><rect x="971.5500000000001" y="390.05" width="13.7" height="13.3" rx="2.6" fill="#fff" stroke="#727272" stroke-width="1.3"/><rect x="896.0" y="415.65000000000003" width="15" height="14.6" rx="3" fill="#0a7aff"/><path d="M898.9 423.85 L902.0 426.95000000000005 L908.0 418.95000000000005" stroke="#fff" stroke-width="2" fill="none" stroke-linecap="butt" stroke-linejoin="miter"/><rect x="933.9000000000001" y="415.65000000000003" width="15" height="14.6" rx="3" fill="#0a7aff"/><path d="M936.8000000000001 423.85 L939.9000000000001 426.95000000000005 L945.9000000000001 418.95000000000005" stroke="#fff" stroke-width="2" fill="none" stroke-linecap="butt" stroke-linejoin="miter"/><rect x="971.5500000000001" y="416.3" width="13.7" height="13.3" rx="2.6" fill="#fff" stroke="#727272" stroke-width="1.3"/><rect x="896.0" y="441.90000000000003" width="15" height="14.6" rx="3" fill="#0a7aff"/><path d="M898.9 450.1 L902.0 453.20000000000005 L908.0 445.20000000000005" stroke="#fff" stroke-width="2" fill="none" stroke-linecap="butt" stroke-linejoin="miter"/><rect x="933.9000000000001" y="441.90000000000003" width="15" height="14.6" rx="3" fill="#0a7aff"/><path d="M936.8000000000001 450.1 L939.9000000000001 453.20000000000005 L945.9000000000001 445.20000000000005" stroke="#fff" stroke-width="2" fill="none" stroke-linecap="butt" stroke-linejoin="miter"/><rect x="971.5500000000001" y="442.55" width="13.7" height="13.3" rx="2.6" fill="#fff" stroke="#727272" stroke-width="1.3"/><rect x="896.0" y="468.15000000000003" width="15" height="14.6" rx="3" fill="#0a7aff"/><path d="M898.9 476.35 L902.0 479.45000000000005 L908.0 471.45000000000005" stroke="#fff" stroke-width="2" fill="none" stroke-linecap="butt" stroke-linejoin="miter"/><rect x="933.9000000000001" y="468.15000000000003" width="15" height="14.6" rx="3" fill="#0a7aff"/><path d="M936.8000000000001 476.35 L939.9000000000001 479.45000000000005 L945.9000000000001 471.45000000000005" stroke="#fff" stroke-width="2" fill="none" stroke-linecap="butt" stroke-linejoin="miter"/><rect x="971.5500000000001" y="468.8" width="13.7" height="13.3" rx="2.6" fill="#fff" stroke="#727272" stroke-width="1.3"/><rect x="896.0" y="494.40000000000003" width="15" height="14.6" rx="3" fill="#0a7aff"/><path d="M898.9 502.6 L902.0 505.70000000000005 L908.0 497.70000000000005" stroke="#fff" stroke-width="2" fill="none" stroke-linecap="butt" stroke-linejoin="miter"/><rect x="933.9000000000001" y="494.40000000000003" width="15" height="14.6" rx="3" fill="#0a7aff"/><path d="M936.8000000000001 502.6 L939.9000000000001 505.70000000000005 L945.9000000000001 497.70000000000005" stroke="#fff" stroke-width="2" fill="none" stroke-linecap="butt" stroke-linejoin="miter"/><rect x="971.5500000000001" y="495.05" width="13.7" height="13.3" rx="2.6" fill="#fff" stroke="#727272" stroke-width="1.3"/><rect x="896.0" y="520.6500000000001" width="15" height="14.6" rx="3" fill="#0a7aff"/><path d="M898.9 528.8500000000001 L902.0 531.95 L908.0 523.95" stroke="#fff" stroke-width="2" fill="none" stroke-linecap="butt" stroke-linejoin="miter"/><rect x="933.9000000000001" y="520.6500000000001" width="15" height="14.6" rx="3" fill="#0a7aff"/><path d="M936.8000000000001 528.8500000000001 L939.9000000000001 531.95 L945.9000000000001 523.95" stroke="#fff" stroke-width="2" fill="none" stroke-linecap="butt" stroke-linejoin="miter"/><rect x="971.5500000000001" y="521.3000000000001" width="13.7" height="13.3" rx="2.6" fill="#fff" stroke="#727272" stroke-width="1.3"/><rect x="896.0" y="546.9000000000001" width="15" height="14.6" rx="3" fill="#0a7aff"/><path d="M898.9 555.1000000000001 L902.0 558.2 L908.0 550.2" stroke="#fff" stroke-width="2" fill="none" stroke-linecap="butt" stroke-linejoin="miter"/><rect x="933.9000000000001" y="546.9000000000001" width="15" height="14.6" rx="3" fill="#0a7aff"/><path d="M936.8000000000001 555.1000000000001 L939.9000000000001 558.2 L945.9000000000001 550.2" stroke="#fff" stroke-width="2" fill="none" stroke-linecap="butt" stroke-linejoin="miter"/><rect x="971.5500000000001" y="547.5500000000001" width="13.7" height="13.3" rx="2.6" fill="#fff" stroke="#727272" stroke-width="1.3"/><rect x="896.0" y="573.1500000000001" width="15" height="14.6" rx="3" fill="#0a7aff"/><path d="M898.9 581.3500000000001 L902.0 584.45 L908.0 576.45" stroke="#fff" stroke-width="2" fill="none" stroke-linecap="butt" stroke-linejoin="miter"/><rect x="933.9000000000001" y="573.1500000000001" width="15" height="14.6" rx="3" fill="#0a7aff"/><path d="M936.8000000000001 581.3500000000001 L939.9000000000001 584.45 L945.9000000000001 576.45" stroke="#fff" stroke-width="2" fill="none" stroke-linecap="butt" stroke-linejoin="miter"/><rect x="971.5500000000001" y="573.8000000000001" width="13.7" height="13.3" rx="2.6" fill="#fff" stroke="#727272" stroke-width="1.3"/><rect x="896.0" y="599.4000000000001" width="15" height="14.6" rx="3" fill="#0a7aff"/><path d="M898.9 607.6000000000001 L902.0 610.7 L908.0 602.7" stroke="#fff" stroke-width="2" fill="none" stroke-linecap="butt" stroke-linejoin="miter"/><rect x="933.9000000000001" y="599.4000000000001" width="15" height="14.6" rx="3" fill="#0a7aff"/><path d="M936.8000000000001 607.6000000000001 L939.9000000000001 610.7 L945.9000000000001 602.7" stroke="#fff" stroke-width="2" fill="none" stroke-linecap="butt" stroke-linejoin="miter"/><rect x="971.5500000000001" y="600.0500000000001" width="13.7" height="13.3" rx="2.6" fill="#fff" stroke="#727272" stroke-width="1.3"/><rect x="896.0" y="625.6500000000001" width="15" height="14.6" rx="3" fill="#0a7aff"/><path d="M898.9 633.8500000000001 L902.0 636.95 L908.0 628.95" stroke="#fff" stroke-width="2" fill="none" stroke-linecap="butt" stroke-linejoin="miter"/><rect x="933.9000000000001" y="625.6500000000001" width="15" height="14.6" rx="3" fill="#0a7aff"/><path d="M936.8000000000001 633.8500000000001 L939.9000000000001 636.95 L945.9000000000001 628.95" stroke="#fff" stroke-width="2" fill="none" stroke-linecap="butt" stroke-linejoin="miter"/><rect x="971.5500000000001" y="626.3000000000001" width="13.7" height="13.3" rx="2.6" fill="#fff" stroke="#727272" stroke-width="1.3"/><rect x="896.0" y="651.9000000000001" width="15" height="14.6" rx="3" fill="#0a7aff"/><path d="M898.9 660.1000000000001 L902.0 663.2 L908.0 655.2" stroke="#fff" stroke-width="2" fill="none" stroke-linecap="butt" stroke-linejoin="miter"/><rect x="933.9000000000001" y="651.9000000000001" width="15" height="14.6" rx="3" fill="#0a7aff"/><path d="M936.8000000000001 660.1000000000001 L939.9000000000001 663.2 L945.9000000000001 655.2" stroke="#fff" stroke-width="2" fill="none" stroke-linecap="butt" stroke-linejoin="miter"/><rect x="971.5500000000001" y="652.5500000000001" width="13.7" height="13.3" rx="2.6" fill="#fff" stroke="#727272" stroke-width="1.3"/></svg>
</div>
<div style="position:absolute;left:1894px;top:586.3px;width:9.6px;height:217.3px;background:#d9d9d9"></div>
<div style="position:absolute;left:410px;top:900px;width:1px;height:28px;background:#cfcfcf"></div>
<div class="t" style="left:781.2px;top:907.78px;font-size:14.44px;color:#111111;">Активные (F5)</div>
<div style="position:absolute;left:896.3px;top:900.3px;width:27.3px;height:27.3px;background:#d3e4e8;border:1px solid #bfcbd0;border-radius:4px"></div>
<div style="position:absolute;left:961px;top:900px;width:1px;height:28px;background:#cfcfcf"></div>
<div style="position:absolute;left:1033.5px;top:900px;width:1px;height:28px;background:#cfcfcf"></div>
<div class="t" style="left:1043.5px;top:903.5px;font-size:6px;line-height:7.6px;color:#4cc2f1;font-weight:bold">1<br>2<br>3</div>
<div style="position:absolute;left:1104px;top:900px;width:1px;height:28px;background:#cfcfcf"></div>
<div style="position:absolute;left:1143px;top:900px;width:1px;height:28px;background:#cfcfcf"></div>
<div class="t" style="left:1465px;top:907.78px;font-size:14.44px;color:#111111;">Активные (F5)</div>
<div class="t" style="left:1590.7px;top:907.63px;font-size:14.61px;color:#111111;">Контроль (F9)</div>
<div style="position:absolute;left:1689.6px;top:901px;width:214.6px;height:26.5px;background:#ffffff;border:1px solid #c6c6c6;border-radius:4px"></div>
<div class="t" style="left:1497px;width:600px;text-align:center;top:907.68px;font-size:14.55px;color:#111111;">Отметить по спискам SKU</div>
<div style="position:absolute;left:1389.4px;top:940.2px;width:57.0px;height:27.2px;background:#ffffff;border:1px solid #c6c6c6;border-radius:4px"></div>
<div style="position:absolute;left:1452.5px;top:940.2px;width:128.9000000000001px;height:27.2px;background:#ffffff;border:1px solid #c6c6c6;border-radius:4px"></div>
<div style="position:absolute;left:1587.3px;top:940.2px;width:123.0px;height:27.2px;background:#ffffff;border:1px solid #c6c6c6;border-radius:4px"></div>
<div style="position:absolute;left:1716.6px;top:940.2px;width:76.80000000000018px;height:27.2px;background:#ffffff;border:1px solid #c6c6c6;border-radius:4px"></div>
<div style="position:absolute;left:1799.3px;top:940.2px;width:113.29999999999995px;height:27.2px;background:#ffffff;border:1px solid #c6c6c6;border-radius:4px"></div>
<div class="t" style="left:1491.3px;top:947.23px;font-size:14.61px;color:#111111;">Сохранить</div>
<div class="t" style="left:1625.8px;top:947.19px;font-size:14.66px;color:#111111;">Отменить</div>
<div class="t" style="left:1755.4px;top:947.23px;font-size:14.5px;color:#111111;">OK</div>
<div class="t" style="left:1838.1px;top:947.03px;font-size:14.85px;color:#111111;">Закрыть</div>
<svg style="position:absolute;left:0;top:0" width="1919" height="975" fill="none"><path d="M381.6 907 H400.4" stroke="#505050" stroke-width="1.8" fill="none" stroke-linecap="round" stroke-linejoin="round" /><path d="M384 912.1 H398" stroke="#4cc2f1" stroke-width="1.8" fill="none" stroke-linecap="round" stroke-linejoin="round" /><path d="M386.5 917 H395.5" stroke="#505050" stroke-width="1.8" fill="none" stroke-linecap="round" stroke-linejoin="round" /><path d="M389 922.1 H393" stroke="#4cc2f1" stroke-width="1.8" fill="none" stroke-linecap="round" stroke-linejoin="round" /><rect x="425" y="904" width="10" height="2.8" fill="#8fd3ef"/><rect x="422.3" y="907.3" width="15.4" height="15.4" rx="2.5" stroke="#777" stroke-width="1.9" fill="none"/><path d="M426.3 915.2 H433.7" stroke="#8fd3ef" stroke-width="1.8" fill="none" stroke-linecap="round" stroke-linejoin="round" /><path d="M456.2 907 H468.5 Q470 907 470 908.5 V920" stroke="#8fd3ef" stroke-width="1.7" fill="none" stroke-linecap="round" stroke-linejoin="round" /><path d="M458.8 904.6 H471 Q472.4 904.6 472.4 906 V916.5" stroke="#4cc2f1" stroke-width="1.7" fill="none" stroke-linecap="round" stroke-linejoin="round" /><rect x="454" y="910" width="13.3" height="13" rx="2" stroke="#555" stroke-width="1.9" fill="#f2f2f2"/><path d="M457.3 916.3 H464.2" stroke="#8fd3ef" stroke-width="1.8" fill="none" stroke-linecap="round" stroke-linejoin="round" /><rect x="761" y="906.5" width="15" height="14.6" rx="3" fill="#0a7aff"/><path d="M763.9 914.7 L767 917.8 L773 909.8" stroke="#fff" stroke-width="2" fill="none" stroke-linecap="butt" stroke-linejoin="miter"/><rect x="900.6" y="905.8000000000001" width="3.6" height="3.6" rx="0.8" stroke="#4cc2f1" stroke-width="1.4" fill="none"/><path d="M908 907.6 H919.6" stroke="#505050" stroke-width="1.7" fill="none" stroke-linecap="round" stroke-linejoin="round" /><rect x="900.6" y="912.1" width="3.6" height="3.6" rx="0.8" stroke="#4cc2f1" stroke-width="1.4" fill="none"/><path d="M908 913.9 H919.6" stroke="#505050" stroke-width="1.7" fill="none" stroke-linecap="round" stroke-linejoin="round" /><rect x="900.6" y="918.5" width="3.6" height="3.6" rx="0.8" stroke="#4cc2f1" stroke-width="1.4" fill="none"/><path d="M908 920.3 H919.6" stroke="#505050" stroke-width="1.7" fill="none" stroke-linecap="round" stroke-linejoin="round" /><rect x="933.8" y="905" width="18.5" height="18.2" rx="0.8" stroke="#222" stroke-width="1.7" fill="none"/><path d="M940 905.5 V922.5 M946.2 905.5 V922.5 M934.5 910.5 H951.5 M934.5 916.8 H951.5" stroke="#4cc2f1" stroke-width="1.5" fill="none" stroke-linecap="round" stroke-linejoin="round" /><path d="M971.4 906.8 H990.4" stroke="#505050" stroke-width="1.8" fill="none" stroke-linecap="round" stroke-linejoin="round" /><path d="M974 912.2 H987.8" stroke="#4cc2f1" stroke-width="1.8" fill="none" stroke-linecap="round" stroke-linejoin="round" /><path d="M976.5 917 H985.3" stroke="#505050" stroke-width="1.8" fill="none" stroke-linecap="round" stroke-linejoin="round" /><path d="M978.6 922 H982.6" stroke="#4cc2f1" stroke-width="1.8" fill="none" stroke-linecap="round" stroke-linejoin="round" /><path d="M1012.35 904.80 L1014.15 904.71 L1015.30 907.50 L1016.52 907.93 L1019.18 906.51 L1020.52 907.72 L1019.36 910.51 L1019.91 911.68 L1022.80 912.55 L1022.89 914.35 L1020.10 915.50 L1019.67 916.72 L1021.09 919.38 L1019.88 920.72 L1017.09 919.56 L1015.92 920.11 L1015.05 923.00 L1013.25 923.09 L1012.10 920.30 L1010.88 919.87 L1008.22 921.29 L1006.88 920.08 L1008.04 917.29 L1007.49 916.12 L1004.60 915.25 L1004.51 913.45 L1007.30 912.30 L1007.73 911.08 L1006.31 908.42 L1007.52 907.08 L1010.31 908.24 L1011.48 907.69 Z" stroke="#444" stroke-width="1.7" fill="none" stroke-linecap="round" stroke-linejoin="round" /><circle cx="1013.7" cy="913.9" r="2.9" stroke="#4cc2f1" stroke-width="1.7" fill="none"/><path d="M1051.3 907 H1062.6" stroke="#505050" stroke-width="1.7" fill="none" stroke-linecap="round" stroke-linejoin="round" /><path d="M1051.3 914.5 H1062.6" stroke="#505050" stroke-width="1.7" fill="none" stroke-linecap="round" stroke-linejoin="round" /><path d="M1051.3 922 H1062.6" stroke="#505050" stroke-width="1.7" fill="none" stroke-linecap="round" stroke-linejoin="round" /><path d="M1075.4 905.9 H1094.7 M1075.4 910.8 H1094.7 M1075.4 915.9 H1083 M1075.4 921 H1083" stroke="#505050" stroke-width="1.7" fill="none" stroke-linecap="round" stroke-linejoin="round" /><path d="M1090.6 914.5 V922.5 M1086.6 918.5 H1094.6" stroke="#4cc2f1" stroke-width="1.7" fill="none" stroke-linecap="round" stroke-linejoin="round" /><path d="M1121.9 908.3 H1117 Q1114.7 908.3 1114.7 910.6 V920.7 Q1114.7 923 1117 923 H1127.6 Q1129.9 923 1129.9 920.7 V916" stroke="#555" stroke-width="1.9" fill="none" stroke-linecap="round" stroke-linejoin="round" /><path d="M1123.6 914.2 L1133 904.8 M1126 904.8 H1133 V911.8" stroke="#4cc2f1" stroke-width="1.8" fill="none" stroke-linecap="round" stroke-linejoin="round" /><path d="M1155 919.3 H1153.7 V908.3 H1166.3 M1162.7 904.3 L1166.5 908.3 L1162.7 912.3" stroke="#2a2a2a" stroke-width="1.7" fill="none" stroke-linecap="round" stroke-linejoin="round" /><path d="M1170.3 908.3 H1172.6 V919.3 H1160 M1163.8 915.3 L1160 919.3 L1163.8 923.3" stroke="#4cc2f1" stroke-width="1.7" fill="none" stroke-linecap="round" stroke-linejoin="round" /><rect x="1445.2" y="906.3" width="15" height="14.6" rx="3" fill="#0a7aff"/><path d="M1448.1000000000001 914.5 L1451.2 917.5999999999999 L1457.2 909.5999999999999" stroke="#fff" stroke-width="2" fill="none" stroke-linecap="butt" stroke-linejoin="miter"/><rect x="1571.65" y="906.9499999999999" width="13.7" height="13.3" rx="2.6" fill="#fff" stroke="#727272" stroke-width="1.3"/><path d="M1410.5 951.5 Q1412.5 946.8 1417.6 946.8 Q1421.5 946.8 1423.8 949.6" stroke="#2f2f2f" stroke-width="2" fill="none" stroke-linecap="round" stroke-linejoin="round" /><path d="M1425.5 945 L1425.5 951.8 L1419.5 950.6 Z" fill="#2f2f2f"/><path d="M1424.5 955.5 Q1422.5 960.2 1417.4 960.2 Q1413.5 960.2 1411.2 957.4" stroke="#4cc2f1" stroke-width="2" fill="none" stroke-linecap="round" stroke-linejoin="round" /><path d="M1409.5 962 L1409.5 955.2 L1415.5 956.4 Z" fill="#4cc2f1"/><path d="M1475.2 947.1 H1482.6 L1487.4 951 V958.6 Q1487.4 960.3 1485.7 960.3 H1475.2 Q1473.5 960.3 1473.5 958.6 V948.8 Q1473.5 947.1 1475.2 947.1 Z" stroke="#3a3a3a" stroke-width="1.8" fill="none" stroke-linecap="round" stroke-linejoin="round" /><path d="M1475.9 958.2 V954.8 H1485.3 V958.2" stroke="#4cc2f1" stroke-width="1.7" fill="none" stroke-linecap="round" stroke-linejoin="round" /><path d="M1608.5 949.2 H1622" stroke="#4cc2f1" stroke-width="1.7" fill="none" stroke-linecap="round" stroke-linejoin="round" /><path d="M1612.6 949 V946.6 H1618 V949" stroke="#4cc2f1" stroke-width="1.5" fill="none" stroke-linecap="round" stroke-linejoin="round" /><path d="M1611 951 V959.3 H1620.2 V951" stroke="#3a3a3a" stroke-width="1.8" fill="none" stroke-linecap="round" stroke-linejoin="round" /><path d="M1737.7 955.5 L1741.7 959 L1751.4 947.6" stroke="#444" stroke-width="2" fill="none" stroke-linecap="round" stroke-linejoin="round" /><path d="M1822 948 L1833.3 959.2 M1833.3 948 L1822 959.2" stroke="#333" stroke-width="1.8" fill="none" stroke-linecap="round" stroke-linejoin="round" /></svg>
<div style="position:absolute;left:1px;top:4px;width:116.8px;height:91.5px;border:3px solid #ff0000;border-radius:2px"></div>
<div style="position:absolute;left:19px;top:568.2px;width:333.8px;height:40.59999999999991px;border:3px solid #ff0000;border-radius:2px"></div>
<div style="position:absolute;left:788.4px;top:181.2px;width:81.39999999999998px;height:717.5px;border:3px solid #ff0000;border-radius:2px"></div>
<div style="position:absolute;left:1777.2px;top:180.3px;width:130.79999999999995px;height:717.2px;border:3px solid #ff0000;border-radius:2px"></div>
<svg style="position:absolute;left:0;top:0" width="1919" height="975" fill="none"><path d="M1363 813 L1496 927" stroke="#ff0000" stroke-width="5.4" stroke-linecap="round"/><path d="M1510.8 941.5 L1486.8 930.8 L1497.8 919.8 Z" fill="#ff0000"/></svg>
</body></html>
